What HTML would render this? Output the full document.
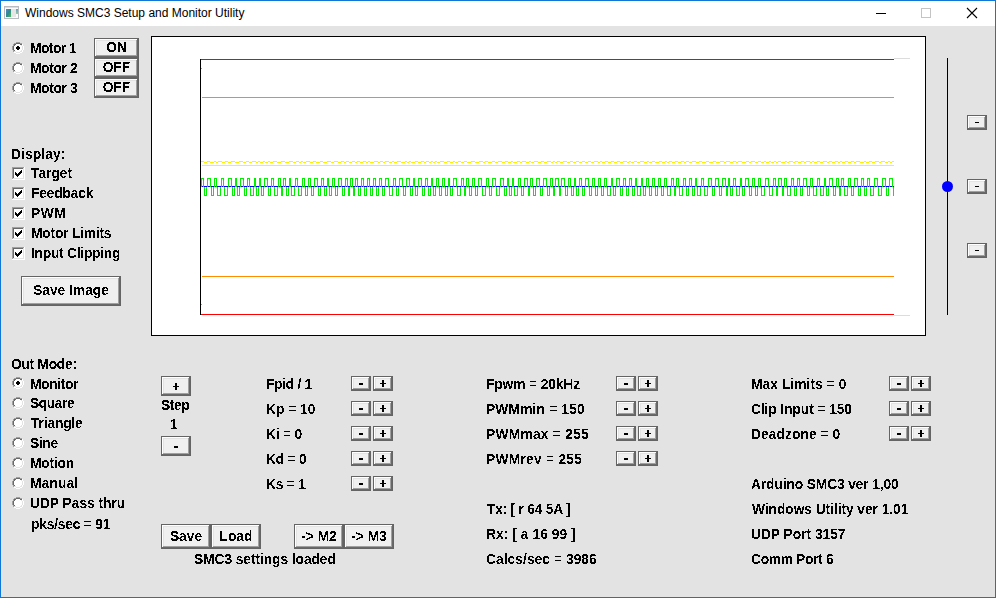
<!DOCTYPE html><html><head><meta charset="utf-8"><style>
html,body{margin:0;padding:0;width:996px;height:598px;overflow:hidden;background:#e3e3e3}
.a{position:absolute;display:block}
.t{position:absolute;font-family:"Liberation Sans",sans-serif;font-weight:bold;font-size:13.75px;line-height:20px;white-space:pre;color:#000}
.b{position:absolute;box-sizing:border-box;background:#f0f0f0;border:1px solid #646464;box-shadow:inset -1px -1px 0 #696969,inset 1px 1px 0 #fff,inset -2px -2px 0 #a0a0a0,inset 2px 2px 0 #e3e3e3;font-family:"Liberation Sans",sans-serif;font-weight:bold;font-size:13.75px;white-space:pre;text-align:center;color:#000}
.t,.b>span{filter:url(#crisp)}
</style></head><body><svg width="0" height="0" style="position:absolute"><filter id="crisp" x="-10%" y="-20%" width="120%" height="140%"><feComponentTransfer><feFuncA type="discrete" tableValues="0 1"/></feComponentTransfer></filter></svg><div class="a" style="left:0;top:0;width:996px;height:598px;box-sizing:border-box;border:1px solid #0f78d6;border-bottom-width:1px"></div><div class="a" style="left:1px;top:1px;width:994px;height:25px;background:#fff"></div><svg class="a" style="left:4px;top:6px" width="15" height="13" shape-rendering="crispEdges"><defs><linearGradient id="ig" x1="0" y1="0" x2="1" y2="1"><stop offset="0" stop-color="#5b86c8"/><stop offset="0.5" stop-color="#2f8a8a"/><stop offset="1" stop-color="#4cb85a"/></linearGradient><linearGradient id="ig2" x1="0" y1="0" x2="0" y2="1"><stop offset="0" stop-color="#6d98d0"/><stop offset="1" stop-color="#8fd28f"/></linearGradient></defs><rect width="15" height="13" fill="#b7bbc2"/><rect x="1" y="1" width="13" height="11" fill="#fbfbfb"/><rect x="1" y="1" width="13" height="1" fill="#d9dce0"/><rect x="2" y="3" width="5" height="8" fill="url(#ig)"/><rect x="7" y="3" width="5" height="8" fill="#e6e6e6"/><rect x="12" y="3" width="2" height="5" fill="url(#ig2)"/></svg><div class="a" style="left:25px;top:4px;font:12px 'Liberation Sans',sans-serif;line-height:18px;color:#000;white-space:pre">Windows SMC3 Setup and Monitor Utility</div><div class="a" style="left:876px;top:13px;width:10px;height:1px;background:#000"></div><div class="a" style="left:921px;top:8px;width:10px;height:10px;box-sizing:border-box;border:1px solid #c4c4c4"></div><svg class="a" style="left:966px;top:7px" width="12" height="12"><path d="M1 1L11 11M11 1L1 11" stroke="#000" stroke-width="1.1"/></svg><div class="a" style="left:151px;top:36px;width:775px;height:300px;box-sizing:border-box;background:#fff;border:1px solid #000"></div><svg class="a" style="left:0;top:0" width="996" height="598" shape-rendering="crispEdges"><rect x="200" y="59" width="1" height="256" fill="#000"/><rect x="201" y="59" width="693" height="1" fill="#ff0000"/><rect x="201" y="314" width="693" height="1" fill="#ff0000"/><rect x="894" y="58" width="16" height="1" fill="#dcdcdc"/><rect x="894" y="315" width="16" height="1" fill="#dcdcdc"/><rect x="202" y="97" width="692" height="1" fill="#ff8c00"/><rect x="202" y="276" width="692" height="1" fill="#ff8c00"/><rect x="201" y="68" width="1" height="1" fill="#ff8c00"/><rect x="201" y="304" width="1" height="1" fill="#ff8c00"/><rect x="202" y="165" width="692" height="1" fill="#dcdcdc"/><g fill="#fff000"><rect x="201" y="161" width="3" height="1"/><rect x="204" y="162" width="3" height="1"/><rect x="207" y="161" width="3" height="1"/><rect x="210" y="162" width="4" height="1"/><rect x="214" y="161" width="2" height="1"/><rect x="216" y="162" width="2" height="1"/><rect x="218" y="161" width="4" height="1"/><rect x="222" y="162" width="3" height="1"/><rect x="225" y="161" width="3" height="1"/><rect x="228" y="162" width="3" height="1"/><rect x="231" y="161" width="4" height="1"/><rect x="235" y="162" width="4" height="1"/><rect x="239" y="161" width="4" height="1"/><rect x="243" y="162" width="3" height="1"/><rect x="246" y="161" width="3" height="1"/><rect x="249" y="162" width="3" height="1"/><rect x="252" y="161" width="4" height="1"/><rect x="256" y="162" width="2" height="1"/><rect x="258" y="161" width="2" height="1"/><rect x="260" y="162" width="3" height="1"/><rect x="263" y="161" width="2" height="1"/><rect x="265" y="162" width="3" height="1"/><rect x="268" y="161" width="2" height="1"/><rect x="270" y="162" width="3" height="1"/><rect x="273" y="161" width="4" height="1"/><rect x="277" y="162" width="4" height="1"/><rect x="281" y="161" width="4" height="1"/><rect x="285" y="162" width="4" height="1"/><rect x="289" y="161" width="4" height="1"/><rect x="293" y="162" width="3" height="1"/><rect x="296" y="161" width="3" height="1"/><rect x="299" y="162" width="2" height="1"/><rect x="301" y="161" width="2" height="1"/><rect x="303" y="162" width="3" height="1"/><rect x="306" y="161" width="4" height="1"/><rect x="310" y="162" width="3" height="1"/><rect x="313" y="161" width="3" height="1"/><rect x="316" y="162" width="4" height="1"/><rect x="320" y="161" width="3" height="1"/><rect x="323" y="162" width="4" height="1"/><rect x="327" y="161" width="4" height="1"/><rect x="331" y="162" width="3" height="1"/><rect x="334" y="161" width="4" height="1"/><rect x="338" y="162" width="3" height="1"/><rect x="341" y="161" width="3" height="1"/><rect x="344" y="162" width="2" height="1"/><rect x="346" y="161" width="3" height="1"/><rect x="349" y="162" width="3" height="1"/><rect x="352" y="161" width="3" height="1"/><rect x="355" y="162" width="2" height="1"/><rect x="357" y="161" width="3" height="1"/><rect x="360" y="162" width="3" height="1"/><rect x="363" y="161" width="3" height="1"/><rect x="366" y="162" width="2" height="1"/><rect x="368" y="161" width="2" height="1"/><rect x="370" y="162" width="4" height="1"/><rect x="374" y="161" width="4" height="1"/><rect x="378" y="162" width="2" height="1"/><rect x="380" y="161" width="3" height="1"/><rect x="383" y="162" width="2" height="1"/><rect x="385" y="161" width="4" height="1"/><rect x="389" y="162" width="3" height="1"/><rect x="392" y="161" width="2" height="1"/><rect x="394" y="162" width="3" height="1"/><rect x="397" y="161" width="4" height="1"/><rect x="401" y="162" width="4" height="1"/><rect x="405" y="161" width="2" height="1"/><rect x="407" y="162" width="2" height="1"/><rect x="409" y="161" width="2" height="1"/><rect x="411" y="162" width="4" height="1"/><rect x="415" y="161" width="3" height="1"/><rect x="418" y="162" width="3" height="1"/><rect x="421" y="161" width="3" height="1"/><rect x="424" y="162" width="2" height="1"/><rect x="426" y="161" width="3" height="1"/><rect x="429" y="162" width="2" height="1"/><rect x="431" y="161" width="2" height="1"/><rect x="433" y="162" width="2" height="1"/><rect x="435" y="161" width="2" height="1"/><rect x="437" y="162" width="3" height="1"/><rect x="440" y="161" width="4" height="1"/><rect x="444" y="162" width="3" height="1"/><rect x="447" y="161" width="3" height="1"/><rect x="450" y="162" width="3" height="1"/><rect x="453" y="161" width="2" height="1"/><rect x="455" y="162" width="3" height="1"/><rect x="458" y="161" width="3" height="1"/><rect x="461" y="162" width="3" height="1"/><rect x="464" y="161" width="3" height="1"/><rect x="467" y="162" width="4" height="1"/><rect x="471" y="161" width="4" height="1"/><rect x="475" y="162" width="4" height="1"/><rect x="479" y="161" width="4" height="1"/><rect x="483" y="162" width="2" height="1"/><rect x="485" y="161" width="3" height="1"/><rect x="488" y="162" width="4" height="1"/><rect x="492" y="161" width="3" height="1"/><rect x="495" y="162" width="3" height="1"/><rect x="498" y="161" width="4" height="1"/><rect x="502" y="162" width="3" height="1"/><rect x="505" y="161" width="3" height="1"/><rect x="508" y="162" width="3" height="1"/><rect x="511" y="161" width="2" height="1"/><rect x="513" y="162" width="4" height="1"/><rect x="517" y="161" width="3" height="1"/><rect x="520" y="162" width="2" height="1"/><rect x="522" y="161" width="4" height="1"/><rect x="526" y="162" width="3" height="1"/><rect x="529" y="161" width="2" height="1"/><rect x="531" y="162" width="3" height="1"/><rect x="534" y="161" width="4" height="1"/><rect x="538" y="162" width="3" height="1"/><rect x="541" y="161" width="3" height="1"/><rect x="544" y="162" width="3" height="1"/><rect x="547" y="161" width="4" height="1"/><rect x="551" y="162" width="2" height="1"/><rect x="553" y="161" width="2" height="1"/><rect x="555" y="162" width="2" height="1"/><rect x="557" y="161" width="3" height="1"/><rect x="560" y="162" width="3" height="1"/><rect x="563" y="161" width="4" height="1"/><rect x="567" y="162" width="3" height="1"/><rect x="570" y="161" width="3" height="1"/><rect x="573" y="162" width="3" height="1"/><rect x="576" y="161" width="3" height="1"/><rect x="579" y="162" width="3" height="1"/><rect x="582" y="161" width="3" height="1"/><rect x="585" y="162" width="3" height="1"/><rect x="588" y="161" width="3" height="1"/><rect x="591" y="162" width="3" height="1"/><rect x="594" y="161" width="4" height="1"/><rect x="598" y="162" width="2" height="1"/><rect x="600" y="161" width="2" height="1"/><rect x="602" y="162" width="3" height="1"/><rect x="605" y="161" width="3" height="1"/><rect x="608" y="162" width="3" height="1"/><rect x="611" y="161" width="3" height="1"/><rect x="614" y="162" width="3" height="1"/><rect x="617" y="161" width="3" height="1"/><rect x="620" y="162" width="3" height="1"/><rect x="623" y="161" width="4" height="1"/><rect x="627" y="162" width="2" height="1"/><rect x="629" y="161" width="2" height="1"/><rect x="631" y="162" width="3" height="1"/><rect x="634" y="161" width="3" height="1"/><rect x="637" y="162" width="3" height="1"/><rect x="640" y="161" width="4" height="1"/><rect x="644" y="162" width="3" height="1"/><rect x="647" y="161" width="2" height="1"/><rect x="649" y="162" width="3" height="1"/><rect x="652" y="161" width="3" height="1"/><rect x="655" y="162" width="4" height="1"/><rect x="659" y="161" width="3" height="1"/><rect x="662" y="162" width="3" height="1"/><rect x="665" y="161" width="2" height="1"/><rect x="667" y="162" width="2" height="1"/><rect x="669" y="161" width="3" height="1"/><rect x="672" y="162" width="3" height="1"/><rect x="675" y="161" width="3" height="1"/><rect x="678" y="162" width="3" height="1"/><rect x="681" y="161" width="3" height="1"/><rect x="684" y="162" width="2" height="1"/><rect x="686" y="161" width="3" height="1"/><rect x="689" y="162" width="3" height="1"/><rect x="692" y="161" width="4" height="1"/><rect x="696" y="162" width="3" height="1"/><rect x="699" y="161" width="3" height="1"/><rect x="702" y="162" width="4" height="1"/><rect x="706" y="161" width="3" height="1"/><rect x="709" y="162" width="4" height="1"/><rect x="713" y="161" width="3" height="1"/><rect x="716" y="162" width="4" height="1"/><rect x="720" y="161" width="4" height="1"/><rect x="724" y="162" width="2" height="1"/><rect x="726" y="161" width="4" height="1"/><rect x="730" y="162" width="3" height="1"/><rect x="733" y="161" width="3" height="1"/><rect x="736" y="162" width="2" height="1"/><rect x="738" y="161" width="4" height="1"/><rect x="742" y="162" width="4" height="1"/><rect x="746" y="161" width="3" height="1"/><rect x="749" y="162" width="2" height="1"/><rect x="751" y="161" width="4" height="1"/><rect x="755" y="162" width="3" height="1"/><rect x="758" y="161" width="3" height="1"/><rect x="761" y="162" width="3" height="1"/><rect x="764" y="161" width="2" height="1"/><rect x="766" y="162" width="3" height="1"/><rect x="769" y="161" width="2" height="1"/><rect x="771" y="162" width="3" height="1"/><rect x="774" y="161" width="2" height="1"/><rect x="776" y="162" width="2" height="1"/><rect x="778" y="161" width="3" height="1"/><rect x="781" y="162" width="4" height="1"/><rect x="785" y="161" width="2" height="1"/><rect x="787" y="162" width="2" height="1"/><rect x="789" y="161" width="4" height="1"/><rect x="793" y="162" width="2" height="1"/><rect x="795" y="161" width="3" height="1"/><rect x="798" y="162" width="3" height="1"/><rect x="801" y="161" width="3" height="1"/><rect x="804" y="162" width="2" height="1"/><rect x="806" y="161" width="4" height="1"/><rect x="810" y="162" width="2" height="1"/><rect x="812" y="161" width="2" height="1"/><rect x="814" y="162" width="3" height="1"/><rect x="817" y="161" width="3" height="1"/><rect x="820" y="162" width="3" height="1"/><rect x="823" y="161" width="4" height="1"/><rect x="827" y="162" width="2" height="1"/><rect x="829" y="161" width="3" height="1"/><rect x="832" y="162" width="3" height="1"/><rect x="835" y="161" width="3" height="1"/><rect x="838" y="162" width="2" height="1"/><rect x="840" y="161" width="2" height="1"/><rect x="842" y="162" width="3" height="1"/><rect x="845" y="161" width="3" height="1"/><rect x="848" y="162" width="3" height="1"/><rect x="851" y="161" width="3" height="1"/><rect x="854" y="162" width="2" height="1"/><rect x="856" y="161" width="4" height="1"/><rect x="860" y="162" width="4" height="1"/><rect x="864" y="161" width="2" height="1"/><rect x="866" y="162" width="3" height="1"/><rect x="869" y="161" width="3" height="1"/><rect x="872" y="162" width="3" height="1"/><rect x="875" y="161" width="4" height="1"/><rect x="879" y="162" width="2" height="1"/><rect x="881" y="161" width="4" height="1"/><rect x="885" y="162" width="3" height="1"/><rect x="888" y="161" width="2" height="1"/><rect x="890" y="162" width="2" height="1"/><rect x="892" y="161" width="2" height="1"/></g><rect x="201" y="186" width="693" height="1" fill="#0000ff"/><g fill="#00f000"><rect x="201" y="178" width="3" height="1"/><rect x="201" y="178" width="1" height="9"/><rect x="203" y="178" width="1" height="9"/><rect x="204" y="195" width="3" height="1"/><rect x="204" y="187" width="1" height="9"/><rect x="206" y="187" width="1" height="9"/><rect x="207" y="178" width="4" height="1"/><rect x="207" y="178" width="1" height="9"/><rect x="210" y="178" width="1" height="9"/><rect x="211" y="195" width="3" height="1"/><rect x="211" y="187" width="1" height="9"/><rect x="213" y="187" width="1" height="9"/><rect x="214" y="178" width="3" height="1"/><rect x="214" y="178" width="1" height="9"/><rect x="216" y="178" width="1" height="9"/><rect x="217" y="195" width="4" height="1"/><rect x="217" y="187" width="1" height="9"/><rect x="220" y="187" width="1" height="9"/><rect x="221" y="178" width="3" height="1"/><rect x="221" y="178" width="1" height="9"/><rect x="223" y="178" width="1" height="9"/><rect x="224" y="195" width="4" height="1"/><rect x="224" y="187" width="1" height="9"/><rect x="227" y="187" width="1" height="9"/><rect x="228" y="178" width="4" height="1"/><rect x="228" y="178" width="1" height="9"/><rect x="231" y="178" width="1" height="9"/><rect x="232" y="195" width="3" height="1"/><rect x="232" y="187" width="1" height="9"/><rect x="234" y="187" width="1" height="9"/><rect x="235" y="178" width="2" height="1"/><rect x="235" y="178" width="1" height="9"/><rect x="236" y="178" width="1" height="9"/><rect x="237" y="195" width="3" height="1"/><rect x="237" y="187" width="1" height="9"/><rect x="239" y="187" width="1" height="9"/><rect x="240" y="178" width="4" height="1"/><rect x="240" y="178" width="1" height="9"/><rect x="243" y="178" width="1" height="9"/><rect x="244" y="195" width="3" height="1"/><rect x="244" y="187" width="1" height="9"/><rect x="246" y="187" width="1" height="9"/><rect x="247" y="178" width="3" height="1"/><rect x="247" y="178" width="1" height="9"/><rect x="249" y="178" width="1" height="9"/><rect x="250" y="195" width="4" height="1"/><rect x="250" y="187" width="1" height="9"/><rect x="253" y="187" width="1" height="9"/><rect x="254" y="178" width="2" height="1"/><rect x="254" y="178" width="1" height="9"/><rect x="255" y="178" width="1" height="9"/><rect x="256" y="195" width="3" height="1"/><rect x="256" y="187" width="1" height="9"/><rect x="258" y="187" width="1" height="9"/><rect x="259" y="178" width="2" height="1"/><rect x="259" y="178" width="1" height="9"/><rect x="260" y="178" width="1" height="9"/><rect x="261" y="195" width="3" height="1"/><rect x="261" y="187" width="1" height="9"/><rect x="263" y="187" width="1" height="9"/><rect x="264" y="178" width="4" height="1"/><rect x="264" y="178" width="1" height="9"/><rect x="267" y="178" width="1" height="9"/><rect x="268" y="195" width="3" height="1"/><rect x="268" y="187" width="1" height="9"/><rect x="270" y="187" width="1" height="9"/><rect x="271" y="178" width="3" height="1"/><rect x="271" y="178" width="1" height="9"/><rect x="273" y="178" width="1" height="9"/><rect x="274" y="195" width="4" height="1"/><rect x="274" y="187" width="1" height="9"/><rect x="277" y="187" width="1" height="9"/><rect x="278" y="178" width="3" height="1"/><rect x="278" y="178" width="1" height="9"/><rect x="280" y="178" width="1" height="9"/><rect x="281" y="195" width="2" height="1"/><rect x="281" y="187" width="1" height="9"/><rect x="282" y="187" width="1" height="9"/><rect x="283" y="178" width="3" height="1"/><rect x="283" y="178" width="1" height="9"/><rect x="285" y="178" width="1" height="9"/><rect x="286" y="195" width="3" height="1"/><rect x="286" y="187" width="1" height="9"/><rect x="288" y="187" width="1" height="9"/><rect x="289" y="178" width="2" height="1"/><rect x="289" y="178" width="1" height="9"/><rect x="290" y="178" width="1" height="9"/><rect x="291" y="195" width="4" height="1"/><rect x="291" y="187" width="1" height="9"/><rect x="294" y="187" width="1" height="9"/><rect x="295" y="178" width="3" height="1"/><rect x="295" y="178" width="1" height="9"/><rect x="297" y="178" width="1" height="9"/><rect x="298" y="195" width="4" height="1"/><rect x="298" y="187" width="1" height="9"/><rect x="301" y="187" width="1" height="9"/><rect x="302" y="178" width="3" height="1"/><rect x="302" y="178" width="1" height="9"/><rect x="304" y="178" width="1" height="9"/><rect x="305" y="195" width="3" height="1"/><rect x="305" y="187" width="1" height="9"/><rect x="307" y="187" width="1" height="9"/><rect x="308" y="178" width="3" height="1"/><rect x="308" y="178" width="1" height="9"/><rect x="310" y="178" width="1" height="9"/><rect x="311" y="195" width="3" height="1"/><rect x="311" y="187" width="1" height="9"/><rect x="313" y="187" width="1" height="9"/><rect x="314" y="178" width="4" height="1"/><rect x="314" y="178" width="1" height="9"/><rect x="317" y="178" width="1" height="9"/><rect x="318" y="195" width="3" height="1"/><rect x="318" y="187" width="1" height="9"/><rect x="320" y="187" width="1" height="9"/><rect x="321" y="178" width="3" height="1"/><rect x="321" y="178" width="1" height="9"/><rect x="323" y="178" width="1" height="9"/><rect x="324" y="195" width="3" height="1"/><rect x="324" y="187" width="1" height="9"/><rect x="326" y="187" width="1" height="9"/><rect x="327" y="178" width="2" height="1"/><rect x="327" y="178" width="1" height="9"/><rect x="328" y="178" width="1" height="9"/><rect x="329" y="195" width="3" height="1"/><rect x="329" y="187" width="1" height="9"/><rect x="331" y="187" width="1" height="9"/><rect x="332" y="178" width="3" height="1"/><rect x="332" y="178" width="1" height="9"/><rect x="334" y="178" width="1" height="9"/><rect x="335" y="195" width="3" height="1"/><rect x="335" y="187" width="1" height="9"/><rect x="337" y="187" width="1" height="9"/><rect x="338" y="178" width="4" height="1"/><rect x="338" y="178" width="1" height="9"/><rect x="341" y="178" width="1" height="9"/><rect x="342" y="195" width="3" height="1"/><rect x="342" y="187" width="1" height="9"/><rect x="344" y="187" width="1" height="9"/><rect x="345" y="178" width="3" height="1"/><rect x="345" y="178" width="1" height="9"/><rect x="347" y="178" width="1" height="9"/><rect x="348" y="195" width="2" height="1"/><rect x="348" y="187" width="1" height="9"/><rect x="349" y="187" width="1" height="9"/><rect x="350" y="178" width="3" height="1"/><rect x="350" y="178" width="1" height="9"/><rect x="352" y="178" width="1" height="9"/><rect x="353" y="195" width="2" height="1"/><rect x="353" y="187" width="1" height="9"/><rect x="354" y="187" width="1" height="9"/><rect x="355" y="178" width="3" height="1"/><rect x="355" y="178" width="1" height="9"/><rect x="357" y="178" width="1" height="9"/><rect x="358" y="195" width="3" height="1"/><rect x="358" y="187" width="1" height="9"/><rect x="360" y="187" width="1" height="9"/><rect x="361" y="178" width="3" height="1"/><rect x="361" y="178" width="1" height="9"/><rect x="363" y="178" width="1" height="9"/><rect x="364" y="195" width="3" height="1"/><rect x="364" y="187" width="1" height="9"/><rect x="366" y="187" width="1" height="9"/><rect x="367" y="178" width="3" height="1"/><rect x="367" y="178" width="1" height="9"/><rect x="369" y="178" width="1" height="9"/><rect x="370" y="195" width="3" height="1"/><rect x="370" y="187" width="1" height="9"/><rect x="372" y="187" width="1" height="9"/><rect x="373" y="178" width="3" height="1"/><rect x="373" y="178" width="1" height="9"/><rect x="375" y="178" width="1" height="9"/><rect x="376" y="195" width="3" height="1"/><rect x="376" y="187" width="1" height="9"/><rect x="378" y="187" width="1" height="9"/><rect x="379" y="178" width="3" height="1"/><rect x="379" y="178" width="1" height="9"/><rect x="381" y="178" width="1" height="9"/><rect x="382" y="195" width="3" height="1"/><rect x="382" y="187" width="1" height="9"/><rect x="384" y="187" width="1" height="9"/><rect x="385" y="178" width="4" height="1"/><rect x="385" y="178" width="1" height="9"/><rect x="388" y="178" width="1" height="9"/><rect x="389" y="195" width="4" height="1"/><rect x="389" y="187" width="1" height="9"/><rect x="392" y="187" width="1" height="9"/><rect x="393" y="178" width="3" height="1"/><rect x="393" y="178" width="1" height="9"/><rect x="395" y="178" width="1" height="9"/><rect x="396" y="195" width="3" height="1"/><rect x="396" y="187" width="1" height="9"/><rect x="398" y="187" width="1" height="9"/><rect x="399" y="178" width="4" height="1"/><rect x="399" y="178" width="1" height="9"/><rect x="402" y="178" width="1" height="9"/><rect x="403" y="195" width="3" height="1"/><rect x="403" y="187" width="1" height="9"/><rect x="405" y="187" width="1" height="9"/><rect x="406" y="178" width="4" height="1"/><rect x="406" y="178" width="1" height="9"/><rect x="409" y="178" width="1" height="9"/><rect x="410" y="195" width="3" height="1"/><rect x="410" y="187" width="1" height="9"/><rect x="412" y="187" width="1" height="9"/><rect x="413" y="178" width="2" height="1"/><rect x="413" y="178" width="1" height="9"/><rect x="414" y="178" width="1" height="9"/><rect x="415" y="195" width="3" height="1"/><rect x="415" y="187" width="1" height="9"/><rect x="417" y="187" width="1" height="9"/><rect x="418" y="178" width="4" height="1"/><rect x="418" y="178" width="1" height="9"/><rect x="421" y="178" width="1" height="9"/><rect x="422" y="195" width="3" height="1"/><rect x="422" y="187" width="1" height="9"/><rect x="424" y="187" width="1" height="9"/><rect x="425" y="178" width="3" height="1"/><rect x="425" y="178" width="1" height="9"/><rect x="427" y="178" width="1" height="9"/><rect x="428" y="195" width="3" height="1"/><rect x="428" y="187" width="1" height="9"/><rect x="430" y="187" width="1" height="9"/><rect x="431" y="178" width="2" height="1"/><rect x="431" y="178" width="1" height="9"/><rect x="432" y="178" width="1" height="9"/><rect x="433" y="195" width="3" height="1"/><rect x="433" y="187" width="1" height="9"/><rect x="435" y="187" width="1" height="9"/><rect x="436" y="178" width="3" height="1"/><rect x="436" y="178" width="1" height="9"/><rect x="438" y="178" width="1" height="9"/><rect x="439" y="195" width="3" height="1"/><rect x="439" y="187" width="1" height="9"/><rect x="441" y="187" width="1" height="9"/><rect x="442" y="178" width="3" height="1"/><rect x="442" y="178" width="1" height="9"/><rect x="444" y="178" width="1" height="9"/><rect x="445" y="195" width="3" height="1"/><rect x="445" y="187" width="1" height="9"/><rect x="447" y="187" width="1" height="9"/><rect x="448" y="178" width="2" height="1"/><rect x="448" y="178" width="1" height="9"/><rect x="449" y="178" width="1" height="9"/><rect x="450" y="195" width="3" height="1"/><rect x="450" y="187" width="1" height="9"/><rect x="452" y="187" width="1" height="9"/><rect x="453" y="178" width="4" height="1"/><rect x="453" y="178" width="1" height="9"/><rect x="456" y="178" width="1" height="9"/><rect x="457" y="195" width="4" height="1"/><rect x="457" y="187" width="1" height="9"/><rect x="460" y="187" width="1" height="9"/><rect x="461" y="178" width="3" height="1"/><rect x="461" y="178" width="1" height="9"/><rect x="463" y="178" width="1" height="9"/><rect x="464" y="195" width="2" height="1"/><rect x="464" y="187" width="1" height="9"/><rect x="465" y="187" width="1" height="9"/><rect x="466" y="178" width="3" height="1"/><rect x="466" y="178" width="1" height="9"/><rect x="468" y="178" width="1" height="9"/><rect x="469" y="195" width="3" height="1"/><rect x="469" y="187" width="1" height="9"/><rect x="471" y="187" width="1" height="9"/><rect x="472" y="178" width="3" height="1"/><rect x="472" y="178" width="1" height="9"/><rect x="474" y="178" width="1" height="9"/><rect x="475" y="195" width="3" height="1"/><rect x="475" y="187" width="1" height="9"/><rect x="477" y="187" width="1" height="9"/><rect x="478" y="178" width="4" height="1"/><rect x="478" y="178" width="1" height="9"/><rect x="481" y="178" width="1" height="9"/><rect x="482" y="195" width="4" height="1"/><rect x="482" y="187" width="1" height="9"/><rect x="485" y="187" width="1" height="9"/><rect x="486" y="178" width="3" height="1"/><rect x="486" y="178" width="1" height="9"/><rect x="488" y="178" width="1" height="9"/><rect x="489" y="195" width="3" height="1"/><rect x="489" y="187" width="1" height="9"/><rect x="491" y="187" width="1" height="9"/><rect x="492" y="178" width="4" height="1"/><rect x="492" y="178" width="1" height="9"/><rect x="495" y="178" width="1" height="9"/><rect x="496" y="195" width="4" height="1"/><rect x="496" y="187" width="1" height="9"/><rect x="499" y="187" width="1" height="9"/><rect x="500" y="178" width="4" height="1"/><rect x="500" y="178" width="1" height="9"/><rect x="503" y="178" width="1" height="9"/><rect x="504" y="195" width="3" height="1"/><rect x="504" y="187" width="1" height="9"/><rect x="506" y="187" width="1" height="9"/><rect x="507" y="178" width="2" height="1"/><rect x="507" y="178" width="1" height="9"/><rect x="508" y="178" width="1" height="9"/><rect x="509" y="195" width="3" height="1"/><rect x="509" y="187" width="1" height="9"/><rect x="511" y="187" width="1" height="9"/><rect x="512" y="178" width="2" height="1"/><rect x="512" y="178" width="1" height="9"/><rect x="513" y="178" width="1" height="9"/><rect x="514" y="195" width="4" height="1"/><rect x="514" y="187" width="1" height="9"/><rect x="517" y="187" width="1" height="9"/><rect x="518" y="178" width="3" height="1"/><rect x="518" y="178" width="1" height="9"/><rect x="520" y="178" width="1" height="9"/><rect x="521" y="195" width="3" height="1"/><rect x="521" y="187" width="1" height="9"/><rect x="523" y="187" width="1" height="9"/><rect x="524" y="178" width="4" height="1"/><rect x="524" y="178" width="1" height="9"/><rect x="527" y="178" width="1" height="9"/><rect x="528" y="195" width="2" height="1"/><rect x="528" y="187" width="1" height="9"/><rect x="529" y="187" width="1" height="9"/><rect x="530" y="178" width="3" height="1"/><rect x="530" y="178" width="1" height="9"/><rect x="532" y="178" width="1" height="9"/><rect x="533" y="195" width="3" height="1"/><rect x="533" y="187" width="1" height="9"/><rect x="535" y="187" width="1" height="9"/><rect x="536" y="178" width="4" height="1"/><rect x="536" y="178" width="1" height="9"/><rect x="539" y="178" width="1" height="9"/><rect x="540" y="195" width="3" height="1"/><rect x="540" y="187" width="1" height="9"/><rect x="542" y="187" width="1" height="9"/><rect x="543" y="178" width="4" height="1"/><rect x="543" y="178" width="1" height="9"/><rect x="546" y="178" width="1" height="9"/><rect x="547" y="195" width="3" height="1"/><rect x="547" y="187" width="1" height="9"/><rect x="549" y="187" width="1" height="9"/><rect x="550" y="178" width="3" height="1"/><rect x="550" y="178" width="1" height="9"/><rect x="552" y="178" width="1" height="9"/><rect x="553" y="195" width="2" height="1"/><rect x="553" y="187" width="1" height="9"/><rect x="554" y="187" width="1" height="9"/><rect x="555" y="178" width="4" height="1"/><rect x="555" y="178" width="1" height="9"/><rect x="558" y="178" width="1" height="9"/><rect x="559" y="195" width="2" height="1"/><rect x="559" y="187" width="1" height="9"/><rect x="560" y="187" width="1" height="9"/><rect x="561" y="178" width="4" height="1"/><rect x="561" y="178" width="1" height="9"/><rect x="564" y="178" width="1" height="9"/><rect x="565" y="195" width="3" height="1"/><rect x="565" y="187" width="1" height="9"/><rect x="567" y="187" width="1" height="9"/><rect x="568" y="178" width="3" height="1"/><rect x="568" y="178" width="1" height="9"/><rect x="570" y="178" width="1" height="9"/><rect x="571" y="195" width="3" height="1"/><rect x="571" y="187" width="1" height="9"/><rect x="573" y="187" width="1" height="9"/><rect x="574" y="178" width="2" height="1"/><rect x="574" y="178" width="1" height="9"/><rect x="575" y="178" width="1" height="9"/><rect x="576" y="195" width="3" height="1"/><rect x="576" y="187" width="1" height="9"/><rect x="578" y="187" width="1" height="9"/><rect x="579" y="178" width="3" height="1"/><rect x="579" y="178" width="1" height="9"/><rect x="581" y="178" width="1" height="9"/><rect x="582" y="195" width="3" height="1"/><rect x="582" y="187" width="1" height="9"/><rect x="584" y="187" width="1" height="9"/><rect x="585" y="178" width="4" height="1"/><rect x="585" y="178" width="1" height="9"/><rect x="588" y="178" width="1" height="9"/><rect x="589" y="195" width="3" height="1"/><rect x="589" y="187" width="1" height="9"/><rect x="591" y="187" width="1" height="9"/><rect x="592" y="178" width="3" height="1"/><rect x="592" y="178" width="1" height="9"/><rect x="594" y="178" width="1" height="9"/><rect x="595" y="195" width="3" height="1"/><rect x="595" y="187" width="1" height="9"/><rect x="597" y="187" width="1" height="9"/><rect x="598" y="178" width="3" height="1"/><rect x="598" y="178" width="1" height="9"/><rect x="600" y="178" width="1" height="9"/><rect x="601" y="195" width="3" height="1"/><rect x="601" y="187" width="1" height="9"/><rect x="603" y="187" width="1" height="9"/><rect x="604" y="178" width="3" height="1"/><rect x="604" y="178" width="1" height="9"/><rect x="606" y="178" width="1" height="9"/><rect x="607" y="195" width="4" height="1"/><rect x="607" y="187" width="1" height="9"/><rect x="610" y="187" width="1" height="9"/><rect x="611" y="178" width="2" height="1"/><rect x="611" y="178" width="1" height="9"/><rect x="612" y="178" width="1" height="9"/><rect x="613" y="195" width="3" height="1"/><rect x="613" y="187" width="1" height="9"/><rect x="615" y="187" width="1" height="9"/><rect x="616" y="178" width="4" height="1"/><rect x="616" y="178" width="1" height="9"/><rect x="619" y="178" width="1" height="9"/><rect x="620" y="195" width="3" height="1"/><rect x="620" y="187" width="1" height="9"/><rect x="622" y="187" width="1" height="9"/><rect x="623" y="178" width="3" height="1"/><rect x="623" y="178" width="1" height="9"/><rect x="625" y="178" width="1" height="9"/><rect x="626" y="195" width="3" height="1"/><rect x="626" y="187" width="1" height="9"/><rect x="628" y="187" width="1" height="9"/><rect x="629" y="178" width="3" height="1"/><rect x="629" y="178" width="1" height="9"/><rect x="631" y="178" width="1" height="9"/><rect x="632" y="195" width="3" height="1"/><rect x="632" y="187" width="1" height="9"/><rect x="634" y="187" width="1" height="9"/><rect x="635" y="178" width="2" height="1"/><rect x="635" y="178" width="1" height="9"/><rect x="636" y="178" width="1" height="9"/><rect x="637" y="195" width="4" height="1"/><rect x="637" y="187" width="1" height="9"/><rect x="640" y="187" width="1" height="9"/><rect x="641" y="178" width="2" height="1"/><rect x="641" y="178" width="1" height="9"/><rect x="642" y="178" width="1" height="9"/><rect x="643" y="195" width="3" height="1"/><rect x="643" y="187" width="1" height="9"/><rect x="645" y="187" width="1" height="9"/><rect x="646" y="178" width="3" height="1"/><rect x="646" y="178" width="1" height="9"/><rect x="648" y="178" width="1" height="9"/><rect x="649" y="195" width="3" height="1"/><rect x="649" y="187" width="1" height="9"/><rect x="651" y="187" width="1" height="9"/><rect x="652" y="178" width="3" height="1"/><rect x="652" y="178" width="1" height="9"/><rect x="654" y="178" width="1" height="9"/><rect x="655" y="195" width="3" height="1"/><rect x="655" y="187" width="1" height="9"/><rect x="657" y="187" width="1" height="9"/><rect x="658" y="178" width="3" height="1"/><rect x="658" y="178" width="1" height="9"/><rect x="660" y="178" width="1" height="9"/><rect x="661" y="195" width="3" height="1"/><rect x="661" y="187" width="1" height="9"/><rect x="663" y="187" width="1" height="9"/><rect x="664" y="178" width="3" height="1"/><rect x="664" y="178" width="1" height="9"/><rect x="666" y="178" width="1" height="9"/><rect x="667" y="195" width="4" height="1"/><rect x="667" y="187" width="1" height="9"/><rect x="670" y="187" width="1" height="9"/><rect x="671" y="178" width="3" height="1"/><rect x="671" y="178" width="1" height="9"/><rect x="673" y="178" width="1" height="9"/><rect x="674" y="195" width="2" height="1"/><rect x="674" y="187" width="1" height="9"/><rect x="675" y="187" width="1" height="9"/><rect x="676" y="178" width="3" height="1"/><rect x="676" y="178" width="1" height="9"/><rect x="678" y="178" width="1" height="9"/><rect x="679" y="195" width="4" height="1"/><rect x="679" y="187" width="1" height="9"/><rect x="682" y="187" width="1" height="9"/><rect x="683" y="178" width="3" height="1"/><rect x="683" y="178" width="1" height="9"/><rect x="685" y="178" width="1" height="9"/><rect x="686" y="195" width="3" height="1"/><rect x="686" y="187" width="1" height="9"/><rect x="688" y="187" width="1" height="9"/><rect x="689" y="178" width="3" height="1"/><rect x="689" y="178" width="1" height="9"/><rect x="691" y="178" width="1" height="9"/><rect x="692" y="195" width="3" height="1"/><rect x="692" y="187" width="1" height="9"/><rect x="694" y="187" width="1" height="9"/><rect x="695" y="178" width="2" height="1"/><rect x="695" y="178" width="1" height="9"/><rect x="696" y="178" width="1" height="9"/><rect x="697" y="195" width="4" height="1"/><rect x="697" y="187" width="1" height="9"/><rect x="700" y="187" width="1" height="9"/><rect x="701" y="178" width="3" height="1"/><rect x="701" y="178" width="1" height="9"/><rect x="703" y="178" width="1" height="9"/><rect x="704" y="195" width="4" height="1"/><rect x="704" y="187" width="1" height="9"/><rect x="707" y="187" width="1" height="9"/><rect x="708" y="178" width="4" height="1"/><rect x="708" y="178" width="1" height="9"/><rect x="711" y="178" width="1" height="9"/><rect x="712" y="195" width="3" height="1"/><rect x="712" y="187" width="1" height="9"/><rect x="714" y="187" width="1" height="9"/><rect x="715" y="178" width="4" height="1"/><rect x="715" y="178" width="1" height="9"/><rect x="718" y="178" width="1" height="9"/><rect x="719" y="195" width="3" height="1"/><rect x="719" y="187" width="1" height="9"/><rect x="721" y="187" width="1" height="9"/><rect x="722" y="178" width="4" height="1"/><rect x="722" y="178" width="1" height="9"/><rect x="725" y="178" width="1" height="9"/><rect x="726" y="195" width="2" height="1"/><rect x="726" y="187" width="1" height="9"/><rect x="727" y="187" width="1" height="9"/><rect x="728" y="178" width="2" height="1"/><rect x="728" y="178" width="1" height="9"/><rect x="729" y="178" width="1" height="9"/><rect x="730" y="195" width="3" height="1"/><rect x="730" y="187" width="1" height="9"/><rect x="732" y="187" width="1" height="9"/><rect x="733" y="178" width="3" height="1"/><rect x="733" y="178" width="1" height="9"/><rect x="735" y="178" width="1" height="9"/><rect x="736" y="195" width="4" height="1"/><rect x="736" y="187" width="1" height="9"/><rect x="739" y="187" width="1" height="9"/><rect x="740" y="178" width="2" height="1"/><rect x="740" y="178" width="1" height="9"/><rect x="741" y="178" width="1" height="9"/><rect x="742" y="195" width="3" height="1"/><rect x="742" y="187" width="1" height="9"/><rect x="744" y="187" width="1" height="9"/><rect x="745" y="178" width="4" height="1"/><rect x="745" y="178" width="1" height="9"/><rect x="748" y="178" width="1" height="9"/><rect x="749" y="195" width="3" height="1"/><rect x="749" y="187" width="1" height="9"/><rect x="751" y="187" width="1" height="9"/><rect x="752" y="178" width="3" height="1"/><rect x="752" y="178" width="1" height="9"/><rect x="754" y="178" width="1" height="9"/><rect x="755" y="195" width="3" height="1"/><rect x="755" y="187" width="1" height="9"/><rect x="757" y="187" width="1" height="9"/><rect x="758" y="178" width="3" height="1"/><rect x="758" y="178" width="1" height="9"/><rect x="760" y="178" width="1" height="9"/><rect x="761" y="195" width="4" height="1"/><rect x="761" y="187" width="1" height="9"/><rect x="764" y="187" width="1" height="9"/><rect x="765" y="178" width="4" height="1"/><rect x="765" y="178" width="1" height="9"/><rect x="768" y="178" width="1" height="9"/><rect x="769" y="195" width="4" height="1"/><rect x="769" y="187" width="1" height="9"/><rect x="772" y="187" width="1" height="9"/><rect x="773" y="178" width="3" height="1"/><rect x="773" y="178" width="1" height="9"/><rect x="775" y="178" width="1" height="9"/><rect x="776" y="195" width="2" height="1"/><rect x="776" y="187" width="1" height="9"/><rect x="777" y="187" width="1" height="9"/><rect x="778" y="178" width="4" height="1"/><rect x="778" y="178" width="1" height="9"/><rect x="781" y="178" width="1" height="9"/><rect x="782" y="195" width="2" height="1"/><rect x="782" y="187" width="1" height="9"/><rect x="783" y="187" width="1" height="9"/><rect x="784" y="178" width="3" height="1"/><rect x="784" y="178" width="1" height="9"/><rect x="786" y="178" width="1" height="9"/><rect x="787" y="195" width="4" height="1"/><rect x="787" y="187" width="1" height="9"/><rect x="790" y="187" width="1" height="9"/><rect x="791" y="178" width="3" height="1"/><rect x="791" y="178" width="1" height="9"/><rect x="793" y="178" width="1" height="9"/><rect x="794" y="195" width="3" height="1"/><rect x="794" y="187" width="1" height="9"/><rect x="796" y="187" width="1" height="9"/><rect x="797" y="178" width="3" height="1"/><rect x="797" y="178" width="1" height="9"/><rect x="799" y="178" width="1" height="9"/><rect x="800" y="195" width="3" height="1"/><rect x="800" y="187" width="1" height="9"/><rect x="802" y="187" width="1" height="9"/><rect x="803" y="178" width="4" height="1"/><rect x="803" y="178" width="1" height="9"/><rect x="806" y="178" width="1" height="9"/><rect x="807" y="195" width="3" height="1"/><rect x="807" y="187" width="1" height="9"/><rect x="809" y="187" width="1" height="9"/><rect x="810" y="178" width="3" height="1"/><rect x="810" y="178" width="1" height="9"/><rect x="812" y="178" width="1" height="9"/><rect x="813" y="195" width="4" height="1"/><rect x="813" y="187" width="1" height="9"/><rect x="816" y="187" width="1" height="9"/><rect x="817" y="178" width="3" height="1"/><rect x="817" y="178" width="1" height="9"/><rect x="819" y="178" width="1" height="9"/><rect x="820" y="195" width="4" height="1"/><rect x="820" y="187" width="1" height="9"/><rect x="823" y="187" width="1" height="9"/><rect x="824" y="178" width="2" height="1"/><rect x="824" y="178" width="1" height="9"/><rect x="825" y="178" width="1" height="9"/><rect x="826" y="195" width="3" height="1"/><rect x="826" y="187" width="1" height="9"/><rect x="828" y="187" width="1" height="9"/><rect x="829" y="178" width="4" height="1"/><rect x="829" y="178" width="1" height="9"/><rect x="832" y="178" width="1" height="9"/><rect x="833" y="195" width="3" height="1"/><rect x="833" y="187" width="1" height="9"/><rect x="835" y="187" width="1" height="9"/><rect x="836" y="178" width="3" height="1"/><rect x="836" y="178" width="1" height="9"/><rect x="838" y="178" width="1" height="9"/><rect x="839" y="195" width="2" height="1"/><rect x="839" y="187" width="1" height="9"/><rect x="840" y="187" width="1" height="9"/><rect x="841" y="178" width="3" height="1"/><rect x="841" y="178" width="1" height="9"/><rect x="843" y="178" width="1" height="9"/><rect x="844" y="195" width="4" height="1"/><rect x="844" y="187" width="1" height="9"/><rect x="847" y="187" width="1" height="9"/><rect x="848" y="178" width="3" height="1"/><rect x="848" y="178" width="1" height="9"/><rect x="850" y="178" width="1" height="9"/><rect x="851" y="195" width="3" height="1"/><rect x="851" y="187" width="1" height="9"/><rect x="853" y="187" width="1" height="9"/><rect x="854" y="178" width="4" height="1"/><rect x="854" y="178" width="1" height="9"/><rect x="857" y="178" width="1" height="9"/><rect x="858" y="195" width="3" height="1"/><rect x="858" y="187" width="1" height="9"/><rect x="860" y="187" width="1" height="9"/><rect x="861" y="178" width="3" height="1"/><rect x="861" y="178" width="1" height="9"/><rect x="863" y="178" width="1" height="9"/><rect x="864" y="195" width="3" height="1"/><rect x="864" y="187" width="1" height="9"/><rect x="866" y="187" width="1" height="9"/><rect x="867" y="178" width="3" height="1"/><rect x="867" y="178" width="1" height="9"/><rect x="869" y="178" width="1" height="9"/><rect x="870" y="195" width="4" height="1"/><rect x="870" y="187" width="1" height="9"/><rect x="873" y="187" width="1" height="9"/><rect x="874" y="178" width="4" height="1"/><rect x="874" y="178" width="1" height="9"/><rect x="877" y="178" width="1" height="9"/><rect x="878" y="195" width="4" height="1"/><rect x="878" y="187" width="1" height="9"/><rect x="881" y="187" width="1" height="9"/><rect x="882" y="178" width="4" height="1"/><rect x="882" y="178" width="1" height="9"/><rect x="885" y="178" width="1" height="9"/><rect x="886" y="195" width="3" height="1"/><rect x="886" y="187" width="1" height="9"/><rect x="888" y="187" width="1" height="9"/><rect x="889" y="178" width="4" height="1"/><rect x="889" y="178" width="1" height="9"/><rect x="892" y="178" width="1" height="9"/><rect x="893" y="195" width="1" height="1"/><rect x="893" y="187" width="1" height="9"/><rect x="893" y="187" width="1" height="9"/></g></svg><div class="a" style="left:947px;top:58px;width:1px;height:257px;background:#000"></div><svg class="a" style="left:941px;top:180px" width="13" height="13"><circle cx="6.5" cy="6.5" r="5.5" fill="#0000ff"/></svg><svg class="a" style="left:12px;top:42px" width="12" height="12" shape-rendering="crispEdges"><circle cx="6" cy="6" r="5" fill="#fff"/><rect x="4" y="0" width="1" height="1" fill="#a0a0a0"/><rect x="5" y="0" width="1" height="1" fill="#a0a0a0"/><rect x="6" y="0" width="1" height="1" fill="#a0a0a0"/><rect x="7" y="0" width="1" height="1" fill="#a0a0a0"/><rect x="2" y="1" width="1" height="1" fill="#a0a0a0"/><rect x="3" y="1" width="1" height="1" fill="#a0a0a0"/><rect x="8" y="1" width="1" height="1" fill="#a0a0a0"/><rect x="9" y="1" width="1" height="1" fill="#a0a0a0"/><rect x="1" y="2" width="1" height="1" fill="#a0a0a0"/><rect x="1" y="3" width="1" height="1" fill="#a0a0a0"/><rect x="0" y="4" width="1" height="1" fill="#a0a0a0"/><rect x="0" y="5" width="1" height="1" fill="#a0a0a0"/><rect x="0" y="6" width="1" height="1" fill="#a0a0a0"/><rect x="0" y="7" width="1" height="1" fill="#a0a0a0"/><rect x="1" y="8" width="1" height="1" fill="#a0a0a0"/><rect x="1" y="9" width="1" height="1" fill="#a0a0a0"/><rect x="4" y="1" width="1" height="1" fill="#696969"/><rect x="5" y="1" width="1" height="1" fill="#696969"/><rect x="6" y="1" width="1" height="1" fill="#696969"/><rect x="7" y="1" width="1" height="1" fill="#696969"/><rect x="2" y="2" width="1" height="1" fill="#696969"/><rect x="3" y="2" width="1" height="1" fill="#696969"/><rect x="8" y="2" width="1" height="1" fill="#696969"/><rect x="9" y="2" width="1" height="1" fill="#696969"/><rect x="2" y="3" width="1" height="1" fill="#696969"/><rect x="1" y="4" width="1" height="1" fill="#696969"/><rect x="1" y="5" width="1" height="1" fill="#696969"/><rect x="1" y="6" width="1" height="1" fill="#696969"/><rect x="1" y="7" width="1" height="1" fill="#696969"/><rect x="2" y="8" width="1" height="1" fill="#696969"/><rect x="4" y="11" width="1" height="1" fill="#ffffff"/><rect x="5" y="11" width="1" height="1" fill="#ffffff"/><rect x="6" y="11" width="1" height="1" fill="#ffffff"/><rect x="7" y="11" width="1" height="1" fill="#ffffff"/><rect x="2" y="10" width="1" height="1" fill="#ffffff"/><rect x="3" y="10" width="1" height="1" fill="#ffffff"/><rect x="8" y="10" width="1" height="1" fill="#ffffff"/><rect x="9" y="10" width="1" height="1" fill="#ffffff"/><rect x="10" y="9" width="1" height="1" fill="#ffffff"/><rect x="10" y="8" width="1" height="1" fill="#ffffff"/><rect x="11" y="4" width="1" height="1" fill="#ffffff"/><rect x="11" y="5" width="1" height="1" fill="#ffffff"/><rect x="11" y="6" width="1" height="1" fill="#ffffff"/><rect x="11" y="7" width="1" height="1" fill="#ffffff"/><rect x="10" y="3" width="1" height="1" fill="#ffffff"/><rect x="10" y="2" width="1" height="1" fill="#ffffff"/><rect x="4" y="10" width="1" height="1" fill="#e3e3e3"/><rect x="5" y="10" width="1" height="1" fill="#e3e3e3"/><rect x="6" y="10" width="1" height="1" fill="#e3e3e3"/><rect x="7" y="10" width="1" height="1" fill="#e3e3e3"/><rect x="2" y="9" width="1" height="1" fill="#e3e3e3"/><rect x="3" y="9" width="1" height="1" fill="#e3e3e3"/><rect x="8" y="9" width="1" height="1" fill="#e3e3e3"/><rect x="9" y="9" width="1" height="1" fill="#e3e3e3"/><rect x="9" y="8" width="1" height="1" fill="#e3e3e3"/><rect x="10" y="4" width="1" height="1" fill="#e3e3e3"/><rect x="10" y="5" width="1" height="1" fill="#e3e3e3"/><rect x="10" y="6" width="1" height="1" fill="#e3e3e3"/><rect x="10" y="7" width="1" height="1" fill="#e3e3e3"/><rect x="9" y="3" width="1" height="1" fill="#e3e3e3"/><rect x="5" y="4" width="2" height="4" fill="#000"/><rect x="4" y="5" width="4" height="2" fill="#000"/></svg><svg class="a" style="left:12px;top:62px" width="12" height="12" shape-rendering="crispEdges"><circle cx="6" cy="6" r="5" fill="#fff"/><rect x="4" y="0" width="1" height="1" fill="#a0a0a0"/><rect x="5" y="0" width="1" height="1" fill="#a0a0a0"/><rect x="6" y="0" width="1" height="1" fill="#a0a0a0"/><rect x="7" y="0" width="1" height="1" fill="#a0a0a0"/><rect x="2" y="1" width="1" height="1" fill="#a0a0a0"/><rect x="3" y="1" width="1" height="1" fill="#a0a0a0"/><rect x="8" y="1" width="1" height="1" fill="#a0a0a0"/><rect x="9" y="1" width="1" height="1" fill="#a0a0a0"/><rect x="1" y="2" width="1" height="1" fill="#a0a0a0"/><rect x="1" y="3" width="1" height="1" fill="#a0a0a0"/><rect x="0" y="4" width="1" height="1" fill="#a0a0a0"/><rect x="0" y="5" width="1" height="1" fill="#a0a0a0"/><rect x="0" y="6" width="1" height="1" fill="#a0a0a0"/><rect x="0" y="7" width="1" height="1" fill="#a0a0a0"/><rect x="1" y="8" width="1" height="1" fill="#a0a0a0"/><rect x="1" y="9" width="1" height="1" fill="#a0a0a0"/><rect x="4" y="1" width="1" height="1" fill="#696969"/><rect x="5" y="1" width="1" height="1" fill="#696969"/><rect x="6" y="1" width="1" height="1" fill="#696969"/><rect x="7" y="1" width="1" height="1" fill="#696969"/><rect x="2" y="2" width="1" height="1" fill="#696969"/><rect x="3" y="2" width="1" height="1" fill="#696969"/><rect x="8" y="2" width="1" height="1" fill="#696969"/><rect x="9" y="2" width="1" height="1" fill="#696969"/><rect x="2" y="3" width="1" height="1" fill="#696969"/><rect x="1" y="4" width="1" height="1" fill="#696969"/><rect x="1" y="5" width="1" height="1" fill="#696969"/><rect x="1" y="6" width="1" height="1" fill="#696969"/><rect x="1" y="7" width="1" height="1" fill="#696969"/><rect x="2" y="8" width="1" height="1" fill="#696969"/><rect x="4" y="11" width="1" height="1" fill="#ffffff"/><rect x="5" y="11" width="1" height="1" fill="#ffffff"/><rect x="6" y="11" width="1" height="1" fill="#ffffff"/><rect x="7" y="11" width="1" height="1" fill="#ffffff"/><rect x="2" y="10" width="1" height="1" fill="#ffffff"/><rect x="3" y="10" width="1" height="1" fill="#ffffff"/><rect x="8" y="10" width="1" height="1" fill="#ffffff"/><rect x="9" y="10" width="1" height="1" fill="#ffffff"/><rect x="10" y="9" width="1" height="1" fill="#ffffff"/><rect x="10" y="8" width="1" height="1" fill="#ffffff"/><rect x="11" y="4" width="1" height="1" fill="#ffffff"/><rect x="11" y="5" width="1" height="1" fill="#ffffff"/><rect x="11" y="6" width="1" height="1" fill="#ffffff"/><rect x="11" y="7" width="1" height="1" fill="#ffffff"/><rect x="10" y="3" width="1" height="1" fill="#ffffff"/><rect x="10" y="2" width="1" height="1" fill="#ffffff"/><rect x="4" y="10" width="1" height="1" fill="#e3e3e3"/><rect x="5" y="10" width="1" height="1" fill="#e3e3e3"/><rect x="6" y="10" width="1" height="1" fill="#e3e3e3"/><rect x="7" y="10" width="1" height="1" fill="#e3e3e3"/><rect x="2" y="9" width="1" height="1" fill="#e3e3e3"/><rect x="3" y="9" width="1" height="1" fill="#e3e3e3"/><rect x="8" y="9" width="1" height="1" fill="#e3e3e3"/><rect x="9" y="9" width="1" height="1" fill="#e3e3e3"/><rect x="9" y="8" width="1" height="1" fill="#e3e3e3"/><rect x="10" y="4" width="1" height="1" fill="#e3e3e3"/><rect x="10" y="5" width="1" height="1" fill="#e3e3e3"/><rect x="10" y="6" width="1" height="1" fill="#e3e3e3"/><rect x="10" y="7" width="1" height="1" fill="#e3e3e3"/><rect x="9" y="3" width="1" height="1" fill="#e3e3e3"/></svg><svg class="a" style="left:12px;top:82px" width="12" height="12" shape-rendering="crispEdges"><circle cx="6" cy="6" r="5" fill="#fff"/><rect x="4" y="0" width="1" height="1" fill="#a0a0a0"/><rect x="5" y="0" width="1" height="1" fill="#a0a0a0"/><rect x="6" y="0" width="1" height="1" fill="#a0a0a0"/><rect x="7" y="0" width="1" height="1" fill="#a0a0a0"/><rect x="2" y="1" width="1" height="1" fill="#a0a0a0"/><rect x="3" y="1" width="1" height="1" fill="#a0a0a0"/><rect x="8" y="1" width="1" height="1" fill="#a0a0a0"/><rect x="9" y="1" width="1" height="1" fill="#a0a0a0"/><rect x="1" y="2" width="1" height="1" fill="#a0a0a0"/><rect x="1" y="3" width="1" height="1" fill="#a0a0a0"/><rect x="0" y="4" width="1" height="1" fill="#a0a0a0"/><rect x="0" y="5" width="1" height="1" fill="#a0a0a0"/><rect x="0" y="6" width="1" height="1" fill="#a0a0a0"/><rect x="0" y="7" width="1" height="1" fill="#a0a0a0"/><rect x="1" y="8" width="1" height="1" fill="#a0a0a0"/><rect x="1" y="9" width="1" height="1" fill="#a0a0a0"/><rect x="4" y="1" width="1" height="1" fill="#696969"/><rect x="5" y="1" width="1" height="1" fill="#696969"/><rect x="6" y="1" width="1" height="1" fill="#696969"/><rect x="7" y="1" width="1" height="1" fill="#696969"/><rect x="2" y="2" width="1" height="1" fill="#696969"/><rect x="3" y="2" width="1" height="1" fill="#696969"/><rect x="8" y="2" width="1" height="1" fill="#696969"/><rect x="9" y="2" width="1" height="1" fill="#696969"/><rect x="2" y="3" width="1" height="1" fill="#696969"/><rect x="1" y="4" width="1" height="1" fill="#696969"/><rect x="1" y="5" width="1" height="1" fill="#696969"/><rect x="1" y="6" width="1" height="1" fill="#696969"/><rect x="1" y="7" width="1" height="1" fill="#696969"/><rect x="2" y="8" width="1" height="1" fill="#696969"/><rect x="4" y="11" width="1" height="1" fill="#ffffff"/><rect x="5" y="11" width="1" height="1" fill="#ffffff"/><rect x="6" y="11" width="1" height="1" fill="#ffffff"/><rect x="7" y="11" width="1" height="1" fill="#ffffff"/><rect x="2" y="10" width="1" height="1" fill="#ffffff"/><rect x="3" y="10" width="1" height="1" fill="#ffffff"/><rect x="8" y="10" width="1" height="1" fill="#ffffff"/><rect x="9" y="10" width="1" height="1" fill="#ffffff"/><rect x="10" y="9" width="1" height="1" fill="#ffffff"/><rect x="10" y="8" width="1" height="1" fill="#ffffff"/><rect x="11" y="4" width="1" height="1" fill="#ffffff"/><rect x="11" y="5" width="1" height="1" fill="#ffffff"/><rect x="11" y="6" width="1" height="1" fill="#ffffff"/><rect x="11" y="7" width="1" height="1" fill="#ffffff"/><rect x="10" y="3" width="1" height="1" fill="#ffffff"/><rect x="10" y="2" width="1" height="1" fill="#ffffff"/><rect x="4" y="10" width="1" height="1" fill="#e3e3e3"/><rect x="5" y="10" width="1" height="1" fill="#e3e3e3"/><rect x="6" y="10" width="1" height="1" fill="#e3e3e3"/><rect x="7" y="10" width="1" height="1" fill="#e3e3e3"/><rect x="2" y="9" width="1" height="1" fill="#e3e3e3"/><rect x="3" y="9" width="1" height="1" fill="#e3e3e3"/><rect x="8" y="9" width="1" height="1" fill="#e3e3e3"/><rect x="9" y="9" width="1" height="1" fill="#e3e3e3"/><rect x="9" y="8" width="1" height="1" fill="#e3e3e3"/><rect x="10" y="4" width="1" height="1" fill="#e3e3e3"/><rect x="10" y="5" width="1" height="1" fill="#e3e3e3"/><rect x="10" y="6" width="1" height="1" fill="#e3e3e3"/><rect x="10" y="7" width="1" height="1" fill="#e3e3e3"/><rect x="9" y="3" width="1" height="1" fill="#e3e3e3"/></svg><svg class="a" style="left:12px;top:377px" width="12" height="12" shape-rendering="crispEdges"><circle cx="6" cy="6" r="5" fill="#fff"/><rect x="4" y="0" width="1" height="1" fill="#a0a0a0"/><rect x="5" y="0" width="1" height="1" fill="#a0a0a0"/><rect x="6" y="0" width="1" height="1" fill="#a0a0a0"/><rect x="7" y="0" width="1" height="1" fill="#a0a0a0"/><rect x="2" y="1" width="1" height="1" fill="#a0a0a0"/><rect x="3" y="1" width="1" height="1" fill="#a0a0a0"/><rect x="8" y="1" width="1" height="1" fill="#a0a0a0"/><rect x="9" y="1" width="1" height="1" fill="#a0a0a0"/><rect x="1" y="2" width="1" height="1" fill="#a0a0a0"/><rect x="1" y="3" width="1" height="1" fill="#a0a0a0"/><rect x="0" y="4" width="1" height="1" fill="#a0a0a0"/><rect x="0" y="5" width="1" height="1" fill="#a0a0a0"/><rect x="0" y="6" width="1" height="1" fill="#a0a0a0"/><rect x="0" y="7" width="1" height="1" fill="#a0a0a0"/><rect x="1" y="8" width="1" height="1" fill="#a0a0a0"/><rect x="1" y="9" width="1" height="1" fill="#a0a0a0"/><rect x="4" y="1" width="1" height="1" fill="#696969"/><rect x="5" y="1" width="1" height="1" fill="#696969"/><rect x="6" y="1" width="1" height="1" fill="#696969"/><rect x="7" y="1" width="1" height="1" fill="#696969"/><rect x="2" y="2" width="1" height="1" fill="#696969"/><rect x="3" y="2" width="1" height="1" fill="#696969"/><rect x="8" y="2" width="1" height="1" fill="#696969"/><rect x="9" y="2" width="1" height="1" fill="#696969"/><rect x="2" y="3" width="1" height="1" fill="#696969"/><rect x="1" y="4" width="1" height="1" fill="#696969"/><rect x="1" y="5" width="1" height="1" fill="#696969"/><rect x="1" y="6" width="1" height="1" fill="#696969"/><rect x="1" y="7" width="1" height="1" fill="#696969"/><rect x="2" y="8" width="1" height="1" fill="#696969"/><rect x="4" y="11" width="1" height="1" fill="#ffffff"/><rect x="5" y="11" width="1" height="1" fill="#ffffff"/><rect x="6" y="11" width="1" height="1" fill="#ffffff"/><rect x="7" y="11" width="1" height="1" fill="#ffffff"/><rect x="2" y="10" width="1" height="1" fill="#ffffff"/><rect x="3" y="10" width="1" height="1" fill="#ffffff"/><rect x="8" y="10" width="1" height="1" fill="#ffffff"/><rect x="9" y="10" width="1" height="1" fill="#ffffff"/><rect x="10" y="9" width="1" height="1" fill="#ffffff"/><rect x="10" y="8" width="1" height="1" fill="#ffffff"/><rect x="11" y="4" width="1" height="1" fill="#ffffff"/><rect x="11" y="5" width="1" height="1" fill="#ffffff"/><rect x="11" y="6" width="1" height="1" fill="#ffffff"/><rect x="11" y="7" width="1" height="1" fill="#ffffff"/><rect x="10" y="3" width="1" height="1" fill="#ffffff"/><rect x="10" y="2" width="1" height="1" fill="#ffffff"/><rect x="4" y="10" width="1" height="1" fill="#e3e3e3"/><rect x="5" y="10" width="1" height="1" fill="#e3e3e3"/><rect x="6" y="10" width="1" height="1" fill="#e3e3e3"/><rect x="7" y="10" width="1" height="1" fill="#e3e3e3"/><rect x="2" y="9" width="1" height="1" fill="#e3e3e3"/><rect x="3" y="9" width="1" height="1" fill="#e3e3e3"/><rect x="8" y="9" width="1" height="1" fill="#e3e3e3"/><rect x="9" y="9" width="1" height="1" fill="#e3e3e3"/><rect x="9" y="8" width="1" height="1" fill="#e3e3e3"/><rect x="10" y="4" width="1" height="1" fill="#e3e3e3"/><rect x="10" y="5" width="1" height="1" fill="#e3e3e3"/><rect x="10" y="6" width="1" height="1" fill="#e3e3e3"/><rect x="10" y="7" width="1" height="1" fill="#e3e3e3"/><rect x="9" y="3" width="1" height="1" fill="#e3e3e3"/><rect x="5" y="4" width="2" height="4" fill="#000"/><rect x="4" y="5" width="4" height="2" fill="#000"/></svg><svg class="a" style="left:12px;top:397px" width="12" height="12" shape-rendering="crispEdges"><circle cx="6" cy="6" r="5" fill="#fff"/><rect x="4" y="0" width="1" height="1" fill="#a0a0a0"/><rect x="5" y="0" width="1" height="1" fill="#a0a0a0"/><rect x="6" y="0" width="1" height="1" fill="#a0a0a0"/><rect x="7" y="0" width="1" height="1" fill="#a0a0a0"/><rect x="2" y="1" width="1" height="1" fill="#a0a0a0"/><rect x="3" y="1" width="1" height="1" fill="#a0a0a0"/><rect x="8" y="1" width="1" height="1" fill="#a0a0a0"/><rect x="9" y="1" width="1" height="1" fill="#a0a0a0"/><rect x="1" y="2" width="1" height="1" fill="#a0a0a0"/><rect x="1" y="3" width="1" height="1" fill="#a0a0a0"/><rect x="0" y="4" width="1" height="1" fill="#a0a0a0"/><rect x="0" y="5" width="1" height="1" fill="#a0a0a0"/><rect x="0" y="6" width="1" height="1" fill="#a0a0a0"/><rect x="0" y="7" width="1" height="1" fill="#a0a0a0"/><rect x="1" y="8" width="1" height="1" fill="#a0a0a0"/><rect x="1" y="9" width="1" height="1" fill="#a0a0a0"/><rect x="4" y="1" width="1" height="1" fill="#696969"/><rect x="5" y="1" width="1" height="1" fill="#696969"/><rect x="6" y="1" width="1" height="1" fill="#696969"/><rect x="7" y="1" width="1" height="1" fill="#696969"/><rect x="2" y="2" width="1" height="1" fill="#696969"/><rect x="3" y="2" width="1" height="1" fill="#696969"/><rect x="8" y="2" width="1" height="1" fill="#696969"/><rect x="9" y="2" width="1" height="1" fill="#696969"/><rect x="2" y="3" width="1" height="1" fill="#696969"/><rect x="1" y="4" width="1" height="1" fill="#696969"/><rect x="1" y="5" width="1" height="1" fill="#696969"/><rect x="1" y="6" width="1" height="1" fill="#696969"/><rect x="1" y="7" width="1" height="1" fill="#696969"/><rect x="2" y="8" width="1" height="1" fill="#696969"/><rect x="4" y="11" width="1" height="1" fill="#ffffff"/><rect x="5" y="11" width="1" height="1" fill="#ffffff"/><rect x="6" y="11" width="1" height="1" fill="#ffffff"/><rect x="7" y="11" width="1" height="1" fill="#ffffff"/><rect x="2" y="10" width="1" height="1" fill="#ffffff"/><rect x="3" y="10" width="1" height="1" fill="#ffffff"/><rect x="8" y="10" width="1" height="1" fill="#ffffff"/><rect x="9" y="10" width="1" height="1" fill="#ffffff"/><rect x="10" y="9" width="1" height="1" fill="#ffffff"/><rect x="10" y="8" width="1" height="1" fill="#ffffff"/><rect x="11" y="4" width="1" height="1" fill="#ffffff"/><rect x="11" y="5" width="1" height="1" fill="#ffffff"/><rect x="11" y="6" width="1" height="1" fill="#ffffff"/><rect x="11" y="7" width="1" height="1" fill="#ffffff"/><rect x="10" y="3" width="1" height="1" fill="#ffffff"/><rect x="10" y="2" width="1" height="1" fill="#ffffff"/><rect x="4" y="10" width="1" height="1" fill="#e3e3e3"/><rect x="5" y="10" width="1" height="1" fill="#e3e3e3"/><rect x="6" y="10" width="1" height="1" fill="#e3e3e3"/><rect x="7" y="10" width="1" height="1" fill="#e3e3e3"/><rect x="2" y="9" width="1" height="1" fill="#e3e3e3"/><rect x="3" y="9" width="1" height="1" fill="#e3e3e3"/><rect x="8" y="9" width="1" height="1" fill="#e3e3e3"/><rect x="9" y="9" width="1" height="1" fill="#e3e3e3"/><rect x="9" y="8" width="1" height="1" fill="#e3e3e3"/><rect x="10" y="4" width="1" height="1" fill="#e3e3e3"/><rect x="10" y="5" width="1" height="1" fill="#e3e3e3"/><rect x="10" y="6" width="1" height="1" fill="#e3e3e3"/><rect x="10" y="7" width="1" height="1" fill="#e3e3e3"/><rect x="9" y="3" width="1" height="1" fill="#e3e3e3"/></svg><svg class="a" style="left:12px;top:417px" width="12" height="12" shape-rendering="crispEdges"><circle cx="6" cy="6" r="5" fill="#fff"/><rect x="4" y="0" width="1" height="1" fill="#a0a0a0"/><rect x="5" y="0" width="1" height="1" fill="#a0a0a0"/><rect x="6" y="0" width="1" height="1" fill="#a0a0a0"/><rect x="7" y="0" width="1" height="1" fill="#a0a0a0"/><rect x="2" y="1" width="1" height="1" fill="#a0a0a0"/><rect x="3" y="1" width="1" height="1" fill="#a0a0a0"/><rect x="8" y="1" width="1" height="1" fill="#a0a0a0"/><rect x="9" y="1" width="1" height="1" fill="#a0a0a0"/><rect x="1" y="2" width="1" height="1" fill="#a0a0a0"/><rect x="1" y="3" width="1" height="1" fill="#a0a0a0"/><rect x="0" y="4" width="1" height="1" fill="#a0a0a0"/><rect x="0" y="5" width="1" height="1" fill="#a0a0a0"/><rect x="0" y="6" width="1" height="1" fill="#a0a0a0"/><rect x="0" y="7" width="1" height="1" fill="#a0a0a0"/><rect x="1" y="8" width="1" height="1" fill="#a0a0a0"/><rect x="1" y="9" width="1" height="1" fill="#a0a0a0"/><rect x="4" y="1" width="1" height="1" fill="#696969"/><rect x="5" y="1" width="1" height="1" fill="#696969"/><rect x="6" y="1" width="1" height="1" fill="#696969"/><rect x="7" y="1" width="1" height="1" fill="#696969"/><rect x="2" y="2" width="1" height="1" fill="#696969"/><rect x="3" y="2" width="1" height="1" fill="#696969"/><rect x="8" y="2" width="1" height="1" fill="#696969"/><rect x="9" y="2" width="1" height="1" fill="#696969"/><rect x="2" y="3" width="1" height="1" fill="#696969"/><rect x="1" y="4" width="1" height="1" fill="#696969"/><rect x="1" y="5" width="1" height="1" fill="#696969"/><rect x="1" y="6" width="1" height="1" fill="#696969"/><rect x="1" y="7" width="1" height="1" fill="#696969"/><rect x="2" y="8" width="1" height="1" fill="#696969"/><rect x="4" y="11" width="1" height="1" fill="#ffffff"/><rect x="5" y="11" width="1" height="1" fill="#ffffff"/><rect x="6" y="11" width="1" height="1" fill="#ffffff"/><rect x="7" y="11" width="1" height="1" fill="#ffffff"/><rect x="2" y="10" width="1" height="1" fill="#ffffff"/><rect x="3" y="10" width="1" height="1" fill="#ffffff"/><rect x="8" y="10" width="1" height="1" fill="#ffffff"/><rect x="9" y="10" width="1" height="1" fill="#ffffff"/><rect x="10" y="9" width="1" height="1" fill="#ffffff"/><rect x="10" y="8" width="1" height="1" fill="#ffffff"/><rect x="11" y="4" width="1" height="1" fill="#ffffff"/><rect x="11" y="5" width="1" height="1" fill="#ffffff"/><rect x="11" y="6" width="1" height="1" fill="#ffffff"/><rect x="11" y="7" width="1" height="1" fill="#ffffff"/><rect x="10" y="3" width="1" height="1" fill="#ffffff"/><rect x="10" y="2" width="1" height="1" fill="#ffffff"/><rect x="4" y="10" width="1" height="1" fill="#e3e3e3"/><rect x="5" y="10" width="1" height="1" fill="#e3e3e3"/><rect x="6" y="10" width="1" height="1" fill="#e3e3e3"/><rect x="7" y="10" width="1" height="1" fill="#e3e3e3"/><rect x="2" y="9" width="1" height="1" fill="#e3e3e3"/><rect x="3" y="9" width="1" height="1" fill="#e3e3e3"/><rect x="8" y="9" width="1" height="1" fill="#e3e3e3"/><rect x="9" y="9" width="1" height="1" fill="#e3e3e3"/><rect x="9" y="8" width="1" height="1" fill="#e3e3e3"/><rect x="10" y="4" width="1" height="1" fill="#e3e3e3"/><rect x="10" y="5" width="1" height="1" fill="#e3e3e3"/><rect x="10" y="6" width="1" height="1" fill="#e3e3e3"/><rect x="10" y="7" width="1" height="1" fill="#e3e3e3"/><rect x="9" y="3" width="1" height="1" fill="#e3e3e3"/></svg><svg class="a" style="left:12px;top:437px" width="12" height="12" shape-rendering="crispEdges"><circle cx="6" cy="6" r="5" fill="#fff"/><rect x="4" y="0" width="1" height="1" fill="#a0a0a0"/><rect x="5" y="0" width="1" height="1" fill="#a0a0a0"/><rect x="6" y="0" width="1" height="1" fill="#a0a0a0"/><rect x="7" y="0" width="1" height="1" fill="#a0a0a0"/><rect x="2" y="1" width="1" height="1" fill="#a0a0a0"/><rect x="3" y="1" width="1" height="1" fill="#a0a0a0"/><rect x="8" y="1" width="1" height="1" fill="#a0a0a0"/><rect x="9" y="1" width="1" height="1" fill="#a0a0a0"/><rect x="1" y="2" width="1" height="1" fill="#a0a0a0"/><rect x="1" y="3" width="1" height="1" fill="#a0a0a0"/><rect x="0" y="4" width="1" height="1" fill="#a0a0a0"/><rect x="0" y="5" width="1" height="1" fill="#a0a0a0"/><rect x="0" y="6" width="1" height="1" fill="#a0a0a0"/><rect x="0" y="7" width="1" height="1" fill="#a0a0a0"/><rect x="1" y="8" width="1" height="1" fill="#a0a0a0"/><rect x="1" y="9" width="1" height="1" fill="#a0a0a0"/><rect x="4" y="1" width="1" height="1" fill="#696969"/><rect x="5" y="1" width="1" height="1" fill="#696969"/><rect x="6" y="1" width="1" height="1" fill="#696969"/><rect x="7" y="1" width="1" height="1" fill="#696969"/><rect x="2" y="2" width="1" height="1" fill="#696969"/><rect x="3" y="2" width="1" height="1" fill="#696969"/><rect x="8" y="2" width="1" height="1" fill="#696969"/><rect x="9" y="2" width="1" height="1" fill="#696969"/><rect x="2" y="3" width="1" height="1" fill="#696969"/><rect x="1" y="4" width="1" height="1" fill="#696969"/><rect x="1" y="5" width="1" height="1" fill="#696969"/><rect x="1" y="6" width="1" height="1" fill="#696969"/><rect x="1" y="7" width="1" height="1" fill="#696969"/><rect x="2" y="8" width="1" height="1" fill="#696969"/><rect x="4" y="11" width="1" height="1" fill="#ffffff"/><rect x="5" y="11" width="1" height="1" fill="#ffffff"/><rect x="6" y="11" width="1" height="1" fill="#ffffff"/><rect x="7" y="11" width="1" height="1" fill="#ffffff"/><rect x="2" y="10" width="1" height="1" fill="#ffffff"/><rect x="3" y="10" width="1" height="1" fill="#ffffff"/><rect x="8" y="10" width="1" height="1" fill="#ffffff"/><rect x="9" y="10" width="1" height="1" fill="#ffffff"/><rect x="10" y="9" width="1" height="1" fill="#ffffff"/><rect x="10" y="8" width="1" height="1" fill="#ffffff"/><rect x="11" y="4" width="1" height="1" fill="#ffffff"/><rect x="11" y="5" width="1" height="1" fill="#ffffff"/><rect x="11" y="6" width="1" height="1" fill="#ffffff"/><rect x="11" y="7" width="1" height="1" fill="#ffffff"/><rect x="10" y="3" width="1" height="1" fill="#ffffff"/><rect x="10" y="2" width="1" height="1" fill="#ffffff"/><rect x="4" y="10" width="1" height="1" fill="#e3e3e3"/><rect x="5" y="10" width="1" height="1" fill="#e3e3e3"/><rect x="6" y="10" width="1" height="1" fill="#e3e3e3"/><rect x="7" y="10" width="1" height="1" fill="#e3e3e3"/><rect x="2" y="9" width="1" height="1" fill="#e3e3e3"/><rect x="3" y="9" width="1" height="1" fill="#e3e3e3"/><rect x="8" y="9" width="1" height="1" fill="#e3e3e3"/><rect x="9" y="9" width="1" height="1" fill="#e3e3e3"/><rect x="9" y="8" width="1" height="1" fill="#e3e3e3"/><rect x="10" y="4" width="1" height="1" fill="#e3e3e3"/><rect x="10" y="5" width="1" height="1" fill="#e3e3e3"/><rect x="10" y="6" width="1" height="1" fill="#e3e3e3"/><rect x="10" y="7" width="1" height="1" fill="#e3e3e3"/><rect x="9" y="3" width="1" height="1" fill="#e3e3e3"/></svg><svg class="a" style="left:12px;top:457px" width="12" height="12" shape-rendering="crispEdges"><circle cx="6" cy="6" r="5" fill="#fff"/><rect x="4" y="0" width="1" height="1" fill="#a0a0a0"/><rect x="5" y="0" width="1" height="1" fill="#a0a0a0"/><rect x="6" y="0" width="1" height="1" fill="#a0a0a0"/><rect x="7" y="0" width="1" height="1" fill="#a0a0a0"/><rect x="2" y="1" width="1" height="1" fill="#a0a0a0"/><rect x="3" y="1" width="1" height="1" fill="#a0a0a0"/><rect x="8" y="1" width="1" height="1" fill="#a0a0a0"/><rect x="9" y="1" width="1" height="1" fill="#a0a0a0"/><rect x="1" y="2" width="1" height="1" fill="#a0a0a0"/><rect x="1" y="3" width="1" height="1" fill="#a0a0a0"/><rect x="0" y="4" width="1" height="1" fill="#a0a0a0"/><rect x="0" y="5" width="1" height="1" fill="#a0a0a0"/><rect x="0" y="6" width="1" height="1" fill="#a0a0a0"/><rect x="0" y="7" width="1" height="1" fill="#a0a0a0"/><rect x="1" y="8" width="1" height="1" fill="#a0a0a0"/><rect x="1" y="9" width="1" height="1" fill="#a0a0a0"/><rect x="4" y="1" width="1" height="1" fill="#696969"/><rect x="5" y="1" width="1" height="1" fill="#696969"/><rect x="6" y="1" width="1" height="1" fill="#696969"/><rect x="7" y="1" width="1" height="1" fill="#696969"/><rect x="2" y="2" width="1" height="1" fill="#696969"/><rect x="3" y="2" width="1" height="1" fill="#696969"/><rect x="8" y="2" width="1" height="1" fill="#696969"/><rect x="9" y="2" width="1" height="1" fill="#696969"/><rect x="2" y="3" width="1" height="1" fill="#696969"/><rect x="1" y="4" width="1" height="1" fill="#696969"/><rect x="1" y="5" width="1" height="1" fill="#696969"/><rect x="1" y="6" width="1" height="1" fill="#696969"/><rect x="1" y="7" width="1" height="1" fill="#696969"/><rect x="2" y="8" width="1" height="1" fill="#696969"/><rect x="4" y="11" width="1" height="1" fill="#ffffff"/><rect x="5" y="11" width="1" height="1" fill="#ffffff"/><rect x="6" y="11" width="1" height="1" fill="#ffffff"/><rect x="7" y="11" width="1" height="1" fill="#ffffff"/><rect x="2" y="10" width="1" height="1" fill="#ffffff"/><rect x="3" y="10" width="1" height="1" fill="#ffffff"/><rect x="8" y="10" width="1" height="1" fill="#ffffff"/><rect x="9" y="10" width="1" height="1" fill="#ffffff"/><rect x="10" y="9" width="1" height="1" fill="#ffffff"/><rect x="10" y="8" width="1" height="1" fill="#ffffff"/><rect x="11" y="4" width="1" height="1" fill="#ffffff"/><rect x="11" y="5" width="1" height="1" fill="#ffffff"/><rect x="11" y="6" width="1" height="1" fill="#ffffff"/><rect x="11" y="7" width="1" height="1" fill="#ffffff"/><rect x="10" y="3" width="1" height="1" fill="#ffffff"/><rect x="10" y="2" width="1" height="1" fill="#ffffff"/><rect x="4" y="10" width="1" height="1" fill="#e3e3e3"/><rect x="5" y="10" width="1" height="1" fill="#e3e3e3"/><rect x="6" y="10" width="1" height="1" fill="#e3e3e3"/><rect x="7" y="10" width="1" height="1" fill="#e3e3e3"/><rect x="2" y="9" width="1" height="1" fill="#e3e3e3"/><rect x="3" y="9" width="1" height="1" fill="#e3e3e3"/><rect x="8" y="9" width="1" height="1" fill="#e3e3e3"/><rect x="9" y="9" width="1" height="1" fill="#e3e3e3"/><rect x="9" y="8" width="1" height="1" fill="#e3e3e3"/><rect x="10" y="4" width="1" height="1" fill="#e3e3e3"/><rect x="10" y="5" width="1" height="1" fill="#e3e3e3"/><rect x="10" y="6" width="1" height="1" fill="#e3e3e3"/><rect x="10" y="7" width="1" height="1" fill="#e3e3e3"/><rect x="9" y="3" width="1" height="1" fill="#e3e3e3"/></svg><svg class="a" style="left:12px;top:477px" width="12" height="12" shape-rendering="crispEdges"><circle cx="6" cy="6" r="5" fill="#fff"/><rect x="4" y="0" width="1" height="1" fill="#a0a0a0"/><rect x="5" y="0" width="1" height="1" fill="#a0a0a0"/><rect x="6" y="0" width="1" height="1" fill="#a0a0a0"/><rect x="7" y="0" width="1" height="1" fill="#a0a0a0"/><rect x="2" y="1" width="1" height="1" fill="#a0a0a0"/><rect x="3" y="1" width="1" height="1" fill="#a0a0a0"/><rect x="8" y="1" width="1" height="1" fill="#a0a0a0"/><rect x="9" y="1" width="1" height="1" fill="#a0a0a0"/><rect x="1" y="2" width="1" height="1" fill="#a0a0a0"/><rect x="1" y="3" width="1" height="1" fill="#a0a0a0"/><rect x="0" y="4" width="1" height="1" fill="#a0a0a0"/><rect x="0" y="5" width="1" height="1" fill="#a0a0a0"/><rect x="0" y="6" width="1" height="1" fill="#a0a0a0"/><rect x="0" y="7" width="1" height="1" fill="#a0a0a0"/><rect x="1" y="8" width="1" height="1" fill="#a0a0a0"/><rect x="1" y="9" width="1" height="1" fill="#a0a0a0"/><rect x="4" y="1" width="1" height="1" fill="#696969"/><rect x="5" y="1" width="1" height="1" fill="#696969"/><rect x="6" y="1" width="1" height="1" fill="#696969"/><rect x="7" y="1" width="1" height="1" fill="#696969"/><rect x="2" y="2" width="1" height="1" fill="#696969"/><rect x="3" y="2" width="1" height="1" fill="#696969"/><rect x="8" y="2" width="1" height="1" fill="#696969"/><rect x="9" y="2" width="1" height="1" fill="#696969"/><rect x="2" y="3" width="1" height="1" fill="#696969"/><rect x="1" y="4" width="1" height="1" fill="#696969"/><rect x="1" y="5" width="1" height="1" fill="#696969"/><rect x="1" y="6" width="1" height="1" fill="#696969"/><rect x="1" y="7" width="1" height="1" fill="#696969"/><rect x="2" y="8" width="1" height="1" fill="#696969"/><rect x="4" y="11" width="1" height="1" fill="#ffffff"/><rect x="5" y="11" width="1" height="1" fill="#ffffff"/><rect x="6" y="11" width="1" height="1" fill="#ffffff"/><rect x="7" y="11" width="1" height="1" fill="#ffffff"/><rect x="2" y="10" width="1" height="1" fill="#ffffff"/><rect x="3" y="10" width="1" height="1" fill="#ffffff"/><rect x="8" y="10" width="1" height="1" fill="#ffffff"/><rect x="9" y="10" width="1" height="1" fill="#ffffff"/><rect x="10" y="9" width="1" height="1" fill="#ffffff"/><rect x="10" y="8" width="1" height="1" fill="#ffffff"/><rect x="11" y="4" width="1" height="1" fill="#ffffff"/><rect x="11" y="5" width="1" height="1" fill="#ffffff"/><rect x="11" y="6" width="1" height="1" fill="#ffffff"/><rect x="11" y="7" width="1" height="1" fill="#ffffff"/><rect x="10" y="3" width="1" height="1" fill="#ffffff"/><rect x="10" y="2" width="1" height="1" fill="#ffffff"/><rect x="4" y="10" width="1" height="1" fill="#e3e3e3"/><rect x="5" y="10" width="1" height="1" fill="#e3e3e3"/><rect x="6" y="10" width="1" height="1" fill="#e3e3e3"/><rect x="7" y="10" width="1" height="1" fill="#e3e3e3"/><rect x="2" y="9" width="1" height="1" fill="#e3e3e3"/><rect x="3" y="9" width="1" height="1" fill="#e3e3e3"/><rect x="8" y="9" width="1" height="1" fill="#e3e3e3"/><rect x="9" y="9" width="1" height="1" fill="#e3e3e3"/><rect x="9" y="8" width="1" height="1" fill="#e3e3e3"/><rect x="10" y="4" width="1" height="1" fill="#e3e3e3"/><rect x="10" y="5" width="1" height="1" fill="#e3e3e3"/><rect x="10" y="6" width="1" height="1" fill="#e3e3e3"/><rect x="10" y="7" width="1" height="1" fill="#e3e3e3"/><rect x="9" y="3" width="1" height="1" fill="#e3e3e3"/></svg><svg class="a" style="left:12px;top:497px" width="12" height="12" shape-rendering="crispEdges"><circle cx="6" cy="6" r="5" fill="#fff"/><rect x="4" y="0" width="1" height="1" fill="#a0a0a0"/><rect x="5" y="0" width="1" height="1" fill="#a0a0a0"/><rect x="6" y="0" width="1" height="1" fill="#a0a0a0"/><rect x="7" y="0" width="1" height="1" fill="#a0a0a0"/><rect x="2" y="1" width="1" height="1" fill="#a0a0a0"/><rect x="3" y="1" width="1" height="1" fill="#a0a0a0"/><rect x="8" y="1" width="1" height="1" fill="#a0a0a0"/><rect x="9" y="1" width="1" height="1" fill="#a0a0a0"/><rect x="1" y="2" width="1" height="1" fill="#a0a0a0"/><rect x="1" y="3" width="1" height="1" fill="#a0a0a0"/><rect x="0" y="4" width="1" height="1" fill="#a0a0a0"/><rect x="0" y="5" width="1" height="1" fill="#a0a0a0"/><rect x="0" y="6" width="1" height="1" fill="#a0a0a0"/><rect x="0" y="7" width="1" height="1" fill="#a0a0a0"/><rect x="1" y="8" width="1" height="1" fill="#a0a0a0"/><rect x="1" y="9" width="1" height="1" fill="#a0a0a0"/><rect x="4" y="1" width="1" height="1" fill="#696969"/><rect x="5" y="1" width="1" height="1" fill="#696969"/><rect x="6" y="1" width="1" height="1" fill="#696969"/><rect x="7" y="1" width="1" height="1" fill="#696969"/><rect x="2" y="2" width="1" height="1" fill="#696969"/><rect x="3" y="2" width="1" height="1" fill="#696969"/><rect x="8" y="2" width="1" height="1" fill="#696969"/><rect x="9" y="2" width="1" height="1" fill="#696969"/><rect x="2" y="3" width="1" height="1" fill="#696969"/><rect x="1" y="4" width="1" height="1" fill="#696969"/><rect x="1" y="5" width="1" height="1" fill="#696969"/><rect x="1" y="6" width="1" height="1" fill="#696969"/><rect x="1" y="7" width="1" height="1" fill="#696969"/><rect x="2" y="8" width="1" height="1" fill="#696969"/><rect x="4" y="11" width="1" height="1" fill="#ffffff"/><rect x="5" y="11" width="1" height="1" fill="#ffffff"/><rect x="6" y="11" width="1" height="1" fill="#ffffff"/><rect x="7" y="11" width="1" height="1" fill="#ffffff"/><rect x="2" y="10" width="1" height="1" fill="#ffffff"/><rect x="3" y="10" width="1" height="1" fill="#ffffff"/><rect x="8" y="10" width="1" height="1" fill="#ffffff"/><rect x="9" y="10" width="1" height="1" fill="#ffffff"/><rect x="10" y="9" width="1" height="1" fill="#ffffff"/><rect x="10" y="8" width="1" height="1" fill="#ffffff"/><rect x="11" y="4" width="1" height="1" fill="#ffffff"/><rect x="11" y="5" width="1" height="1" fill="#ffffff"/><rect x="11" y="6" width="1" height="1" fill="#ffffff"/><rect x="11" y="7" width="1" height="1" fill="#ffffff"/><rect x="10" y="3" width="1" height="1" fill="#ffffff"/><rect x="10" y="2" width="1" height="1" fill="#ffffff"/><rect x="4" y="10" width="1" height="1" fill="#e3e3e3"/><rect x="5" y="10" width="1" height="1" fill="#e3e3e3"/><rect x="6" y="10" width="1" height="1" fill="#e3e3e3"/><rect x="7" y="10" width="1" height="1" fill="#e3e3e3"/><rect x="2" y="9" width="1" height="1" fill="#e3e3e3"/><rect x="3" y="9" width="1" height="1" fill="#e3e3e3"/><rect x="8" y="9" width="1" height="1" fill="#e3e3e3"/><rect x="9" y="9" width="1" height="1" fill="#e3e3e3"/><rect x="9" y="8" width="1" height="1" fill="#e3e3e3"/><rect x="10" y="4" width="1" height="1" fill="#e3e3e3"/><rect x="10" y="5" width="1" height="1" fill="#e3e3e3"/><rect x="10" y="6" width="1" height="1" fill="#e3e3e3"/><rect x="10" y="7" width="1" height="1" fill="#e3e3e3"/><rect x="9" y="3" width="1" height="1" fill="#e3e3e3"/></svg><svg class="a" style="left:12px;top:167px" width="13" height="13" shape-rendering="crispEdges"><rect width="13" height="13" fill="#fff"/><rect width="12" height="1" fill="#a0a0a0"/><rect width="1" height="12" fill="#a0a0a0"/><rect x="1" y="1" width="10" height="1" fill="#696969"/><rect x="1" y="1" width="1" height="10" fill="#696969"/><rect x="1" y="11" width="11" height="1" fill="#e3e3e3"/><rect x="11" y="1" width="1" height="11" fill="#e3e3e3"/><g fill="#000"><rect x="9" y="3" width="1" height="1"/><rect x="8" y="4" width="1" height="1"/><rect x="9" y="4" width="1" height="1"/><rect x="3" y="5" width="1" height="1"/><rect x="7" y="5" width="1" height="1"/><rect x="8" y="5" width="1" height="1"/><rect x="9" y="5" width="1" height="1"/><rect x="3" y="6" width="1" height="1"/><rect x="4" y="6" width="1" height="1"/><rect x="6" y="6" width="1" height="1"/><rect x="7" y="6" width="1" height="1"/><rect x="8" y="6" width="1" height="1"/><rect x="3" y="7" width="1" height="1"/><rect x="4" y="7" width="1" height="1"/><rect x="5" y="7" width="1" height="1"/><rect x="6" y="7" width="1" height="1"/><rect x="7" y="7" width="1" height="1"/><rect x="4" y="8" width="1" height="1"/><rect x="5" y="8" width="1" height="1"/><rect x="6" y="8" width="1" height="1"/><rect x="5" y="9" width="1" height="1"/></g></svg><svg class="a" style="left:12px;top:187px" width="13" height="13" shape-rendering="crispEdges"><rect width="13" height="13" fill="#fff"/><rect width="12" height="1" fill="#a0a0a0"/><rect width="1" height="12" fill="#a0a0a0"/><rect x="1" y="1" width="10" height="1" fill="#696969"/><rect x="1" y="1" width="1" height="10" fill="#696969"/><rect x="1" y="11" width="11" height="1" fill="#e3e3e3"/><rect x="11" y="1" width="1" height="11" fill="#e3e3e3"/><g fill="#000"><rect x="9" y="3" width="1" height="1"/><rect x="8" y="4" width="1" height="1"/><rect x="9" y="4" width="1" height="1"/><rect x="3" y="5" width="1" height="1"/><rect x="7" y="5" width="1" height="1"/><rect x="8" y="5" width="1" height="1"/><rect x="9" y="5" width="1" height="1"/><rect x="3" y="6" width="1" height="1"/><rect x="4" y="6" width="1" height="1"/><rect x="6" y="6" width="1" height="1"/><rect x="7" y="6" width="1" height="1"/><rect x="8" y="6" width="1" height="1"/><rect x="3" y="7" width="1" height="1"/><rect x="4" y="7" width="1" height="1"/><rect x="5" y="7" width="1" height="1"/><rect x="6" y="7" width="1" height="1"/><rect x="7" y="7" width="1" height="1"/><rect x="4" y="8" width="1" height="1"/><rect x="5" y="8" width="1" height="1"/><rect x="6" y="8" width="1" height="1"/><rect x="5" y="9" width="1" height="1"/></g></svg><svg class="a" style="left:12px;top:207px" width="13" height="13" shape-rendering="crispEdges"><rect width="13" height="13" fill="#fff"/><rect width="12" height="1" fill="#a0a0a0"/><rect width="1" height="12" fill="#a0a0a0"/><rect x="1" y="1" width="10" height="1" fill="#696969"/><rect x="1" y="1" width="1" height="10" fill="#696969"/><rect x="1" y="11" width="11" height="1" fill="#e3e3e3"/><rect x="11" y="1" width="1" height="11" fill="#e3e3e3"/><g fill="#000"><rect x="9" y="3" width="1" height="1"/><rect x="8" y="4" width="1" height="1"/><rect x="9" y="4" width="1" height="1"/><rect x="3" y="5" width="1" height="1"/><rect x="7" y="5" width="1" height="1"/><rect x="8" y="5" width="1" height="1"/><rect x="9" y="5" width="1" height="1"/><rect x="3" y="6" width="1" height="1"/><rect x="4" y="6" width="1" height="1"/><rect x="6" y="6" width="1" height="1"/><rect x="7" y="6" width="1" height="1"/><rect x="8" y="6" width="1" height="1"/><rect x="3" y="7" width="1" height="1"/><rect x="4" y="7" width="1" height="1"/><rect x="5" y="7" width="1" height="1"/><rect x="6" y="7" width="1" height="1"/><rect x="7" y="7" width="1" height="1"/><rect x="4" y="8" width="1" height="1"/><rect x="5" y="8" width="1" height="1"/><rect x="6" y="8" width="1" height="1"/><rect x="5" y="9" width="1" height="1"/></g></svg><svg class="a" style="left:12px;top:227px" width="13" height="13" shape-rendering="crispEdges"><rect width="13" height="13" fill="#fff"/><rect width="12" height="1" fill="#a0a0a0"/><rect width="1" height="12" fill="#a0a0a0"/><rect x="1" y="1" width="10" height="1" fill="#696969"/><rect x="1" y="1" width="1" height="10" fill="#696969"/><rect x="1" y="11" width="11" height="1" fill="#e3e3e3"/><rect x="11" y="1" width="1" height="11" fill="#e3e3e3"/><g fill="#000"><rect x="9" y="3" width="1" height="1"/><rect x="8" y="4" width="1" height="1"/><rect x="9" y="4" width="1" height="1"/><rect x="3" y="5" width="1" height="1"/><rect x="7" y="5" width="1" height="1"/><rect x="8" y="5" width="1" height="1"/><rect x="9" y="5" width="1" height="1"/><rect x="3" y="6" width="1" height="1"/><rect x="4" y="6" width="1" height="1"/><rect x="6" y="6" width="1" height="1"/><rect x="7" y="6" width="1" height="1"/><rect x="8" y="6" width="1" height="1"/><rect x="3" y="7" width="1" height="1"/><rect x="4" y="7" width="1" height="1"/><rect x="5" y="7" width="1" height="1"/><rect x="6" y="7" width="1" height="1"/><rect x="7" y="7" width="1" height="1"/><rect x="4" y="8" width="1" height="1"/><rect x="5" y="8" width="1" height="1"/><rect x="6" y="8" width="1" height="1"/><rect x="5" y="9" width="1" height="1"/></g></svg><svg class="a" style="left:12px;top:247px" width="13" height="13" shape-rendering="crispEdges"><rect width="13" height="13" fill="#fff"/><rect width="12" height="1" fill="#a0a0a0"/><rect width="1" height="12" fill="#a0a0a0"/><rect x="1" y="1" width="10" height="1" fill="#696969"/><rect x="1" y="1" width="1" height="10" fill="#696969"/><rect x="1" y="11" width="11" height="1" fill="#e3e3e3"/><rect x="11" y="1" width="1" height="11" fill="#e3e3e3"/><g fill="#000"><rect x="9" y="3" width="1" height="1"/><rect x="8" y="4" width="1" height="1"/><rect x="9" y="4" width="1" height="1"/><rect x="3" y="5" width="1" height="1"/><rect x="7" y="5" width="1" height="1"/><rect x="8" y="5" width="1" height="1"/><rect x="9" y="5" width="1" height="1"/><rect x="3" y="6" width="1" height="1"/><rect x="4" y="6" width="1" height="1"/><rect x="6" y="6" width="1" height="1"/><rect x="7" y="6" width="1" height="1"/><rect x="8" y="6" width="1" height="1"/><rect x="3" y="7" width="1" height="1"/><rect x="4" y="7" width="1" height="1"/><rect x="5" y="7" width="1" height="1"/><rect x="6" y="7" width="1" height="1"/><rect x="7" y="7" width="1" height="1"/><rect x="4" y="8" width="1" height="1"/><rect x="5" y="8" width="1" height="1"/><rect x="6" y="8" width="1" height="1"/><rect x="5" y="9" width="1" height="1"/></g></svg><div class="b" style="left:94px;top:38px;width:45px;height:20px;line-height:17px"><span>ON</span></div><div class="b" style="left:94px;top:58px;width:45px;height:20px;line-height:17px"><span>OFF</span></div><div class="b" style="left:94px;top:78px;width:45px;height:20px;line-height:17px"><span>OFF</span></div><div class="b" style="left:21px;top:276px;width:100px;height:30px;line-height:27px"><span>Save Image</span></div><div class="b" style="left:161px;top:376px;width:30px;height:20px;line-height:19px"><span>+</span></div><div class="b" style="left:161px;top:436px;width:30px;height:20px;line-height:19px"><span>-</span></div><div class="b" style="left:161px;top:524px;width:50px;height:25px;line-height:24px"><span>Save</span></div><div class="b" style="left:211px;top:524px;width:50px;height:25px;line-height:24px"><span>Load</span></div><div class="b" style="left:294px;top:524px;width:50px;height:25px;line-height:24px"><span>-> M2</span></div><div class="b" style="left:344px;top:524px;width:50px;height:25px;line-height:24px"><span>-> M3</span></div><div class="b" style="left:967px;top:115px;width:20px;height:15px"><div class="a" style="left:7px;top:6px;width:4px;height:1px;background:#000"></div></div><div class="b" style="left:967px;top:179px;width:20px;height:15px"><div class="a" style="left:7px;top:6px;width:4px;height:1px;background:#000"></div></div><div class="b" style="left:967px;top:243px;width:20px;height:15px"><div class="a" style="left:7px;top:6px;width:4px;height:1px;background:#000"></div></div><div class="b" style="left:351px;top:376px;width:20px;height:15px;line-height:14px"><span>-</span></div><div class="b" style="left:373px;top:376px;width:20px;height:15px;line-height:14px"><span>+</span></div><div class="b" style="left:351px;top:401px;width:20px;height:15px;line-height:14px"><span>-</span></div><div class="b" style="left:373px;top:401px;width:20px;height:15px;line-height:14px"><span>+</span></div><div class="b" style="left:351px;top:426px;width:20px;height:15px;line-height:14px"><span>-</span></div><div class="b" style="left:373px;top:426px;width:20px;height:15px;line-height:14px"><span>+</span></div><div class="b" style="left:351px;top:451px;width:20px;height:15px;line-height:14px"><span>-</span></div><div class="b" style="left:373px;top:451px;width:20px;height:15px;line-height:14px"><span>+</span></div><div class="b" style="left:351px;top:476px;width:20px;height:15px;line-height:14px"><span>-</span></div><div class="b" style="left:373px;top:476px;width:20px;height:15px;line-height:14px"><span>+</span></div><div class="b" style="left:616px;top:376px;width:20px;height:15px;line-height:14px"><span>-</span></div><div class="b" style="left:638px;top:376px;width:20px;height:15px;line-height:14px"><span>+</span></div><div class="b" style="left:616px;top:401px;width:20px;height:15px;line-height:14px"><span>-</span></div><div class="b" style="left:638px;top:401px;width:20px;height:15px;line-height:14px"><span>+</span></div><div class="b" style="left:616px;top:426px;width:20px;height:15px;line-height:14px"><span>-</span></div><div class="b" style="left:638px;top:426px;width:20px;height:15px;line-height:14px"><span>+</span></div><div class="b" style="left:616px;top:451px;width:20px;height:15px;line-height:14px"><span>-</span></div><div class="b" style="left:638px;top:451px;width:20px;height:15px;line-height:14px"><span>+</span></div><div class="b" style="left:889px;top:376px;width:20px;height:15px;line-height:14px"><span>-</span></div><div class="b" style="left:911px;top:376px;width:20px;height:15px;line-height:14px"><span>+</span></div><div class="b" style="left:889px;top:401px;width:20px;height:15px;line-height:14px"><span>-</span></div><div class="b" style="left:911px;top:401px;width:20px;height:15px;line-height:14px"><span>+</span></div><div class="b" style="left:889px;top:426px;width:20px;height:15px;line-height:14px"><span>-</span></div><div class="b" style="left:911px;top:426px;width:20px;height:15px;line-height:14px"><span>+</span></div><div class="t" id="t0" style="left:30px;top:39px;letter-spacing:-0.500px">Motor 1</div><div class="t" id="t1" style="left:30px;top:59px;letter-spacing:-0.333px">Motor 2</div><div class="t" id="t2" style="left:30px;top:79px;letter-spacing:-0.333px">Motor 3</div><div class="t" id="t3" style="left:11px;top:145px;letter-spacing:0.143px">Display:</div><div class="t" id="t4" style="left:31px;top:164px;letter-spacing:0.000px">Target</div><div class="t" id="t5" style="left:31px;top:184px;letter-spacing:-0.143px">Feedback</div><div class="t" id="t6" style="left:31px;top:204px;letter-spacing:0.500px">PWM</div><div class="t" id="t7" style="left:31px;top:224px;letter-spacing:-0.182px">Motor Limits</div><div class="t" id="t8" style="left:31px;top:244px;letter-spacing:-0.231px">Input Clipping</div><div class="t" id="t9" style="left:11px;top:355px;letter-spacing:-0.250px">Out Mode:</div><div class="t" id="t10" style="left:30px;top:375px;letter-spacing:-0.333px">Monitor</div><div class="t" id="t11" style="left:30px;top:394px;letter-spacing:-0.400px">Square</div><div class="t" id="t12" style="left:31px;top:414px;letter-spacing:-0.143px">Triangle</div><div class="t" id="t13" style="left:30px;top:434px;letter-spacing:-0.333px">Sine</div><div class="t" id="t14" style="left:30px;top:454px;letter-spacing:-0.200px">Motion</div><div class="t" id="t15" style="left:30px;top:474px;letter-spacing:0.200px">Manual</div><div class="t" id="t16" style="left:30px;top:494px;letter-spacing:0.000px">UDP Pass thru</div><div class="t" id="t17" style="left:31px;top:515px;letter-spacing:-0.182px">pks/sec = 91</div><div class="t" id="t18" style="left:161px;top:396px;letter-spacing:-0.333px">Step</div><div class="t" id="t19" style="left:170px;top:415px;letter-spacing:-4.000px">1</div><div class="t" id="t20" style="left:266px;top:375px;letter-spacing:-0.286px">Fpid / 1</div><div class="t" id="t21" style="left:266px;top:400px;letter-spacing:0.000px">Kp = 10</div><div class="t" id="t22" style="left:266px;top:425px;letter-spacing:-0.200px">Ki = 0</div><div class="t" id="t23" style="left:266px;top:450px;letter-spacing:-0.200px">Kd = 0</div><div class="t" id="t24" style="left:266px;top:475px;letter-spacing:-0.200px">Ks = 1</div><div class="t" id="t25" style="left:486px;top:375px;letter-spacing:-0.091px">Fpwm = 20kHz</div><div class="t" id="t26" style="left:486px;top:400px;letter-spacing:0.182px">PWMmin = 150</div><div class="t" id="t27" style="left:486px;top:425px;letter-spacing:0.273px">PWMmax = 255</div><div class="t" id="t28" style="left:486px;top:450px;letter-spacing:0.273px">PWMrev = 255</div><div class="t" id="t29" style="left:487px;top:500px;letter-spacing:-0.214px">Tx: [ r 64 5A ]</div><div class="t" id="t30" style="left:486px;top:525px;letter-spacing:0.071px">Rx: [ a 16 99 ]</div><div class="t" id="t31" style="left:486px;top:550px;letter-spacing:0.067px">Calcs/sec = 3986</div><div class="t" id="t32" style="left:751px;top:375px;letter-spacing:0.077px">Max Limits = 0</div><div class="t" id="t33" style="left:751px;top:400px;letter-spacing:-0.067px">Clip Input = 150</div><div class="t" id="t34" style="left:751px;top:425px;letter-spacing:0.091px">Deadzone = 0</div><div class="t" id="t35" style="left:751px;top:475px;letter-spacing:-0.100px">Arduino SMC3 ver 1,00</div><div class="t" id="t36" style="left:752px;top:500px;letter-spacing:-0.043px">Windows Utility ver 1.01</div><div class="t" id="t37" style="left:751px;top:525px;letter-spacing:0.000px">UDP Port 3157</div><div class="t" id="t38" style="left:751px;top:550px;letter-spacing:-0.300px">Comm Port 6</div><div class="t" id="t39" style="left:194px;top:550px;letter-spacing:-0.053px">SMC3 settings loaded</div></body></html>
